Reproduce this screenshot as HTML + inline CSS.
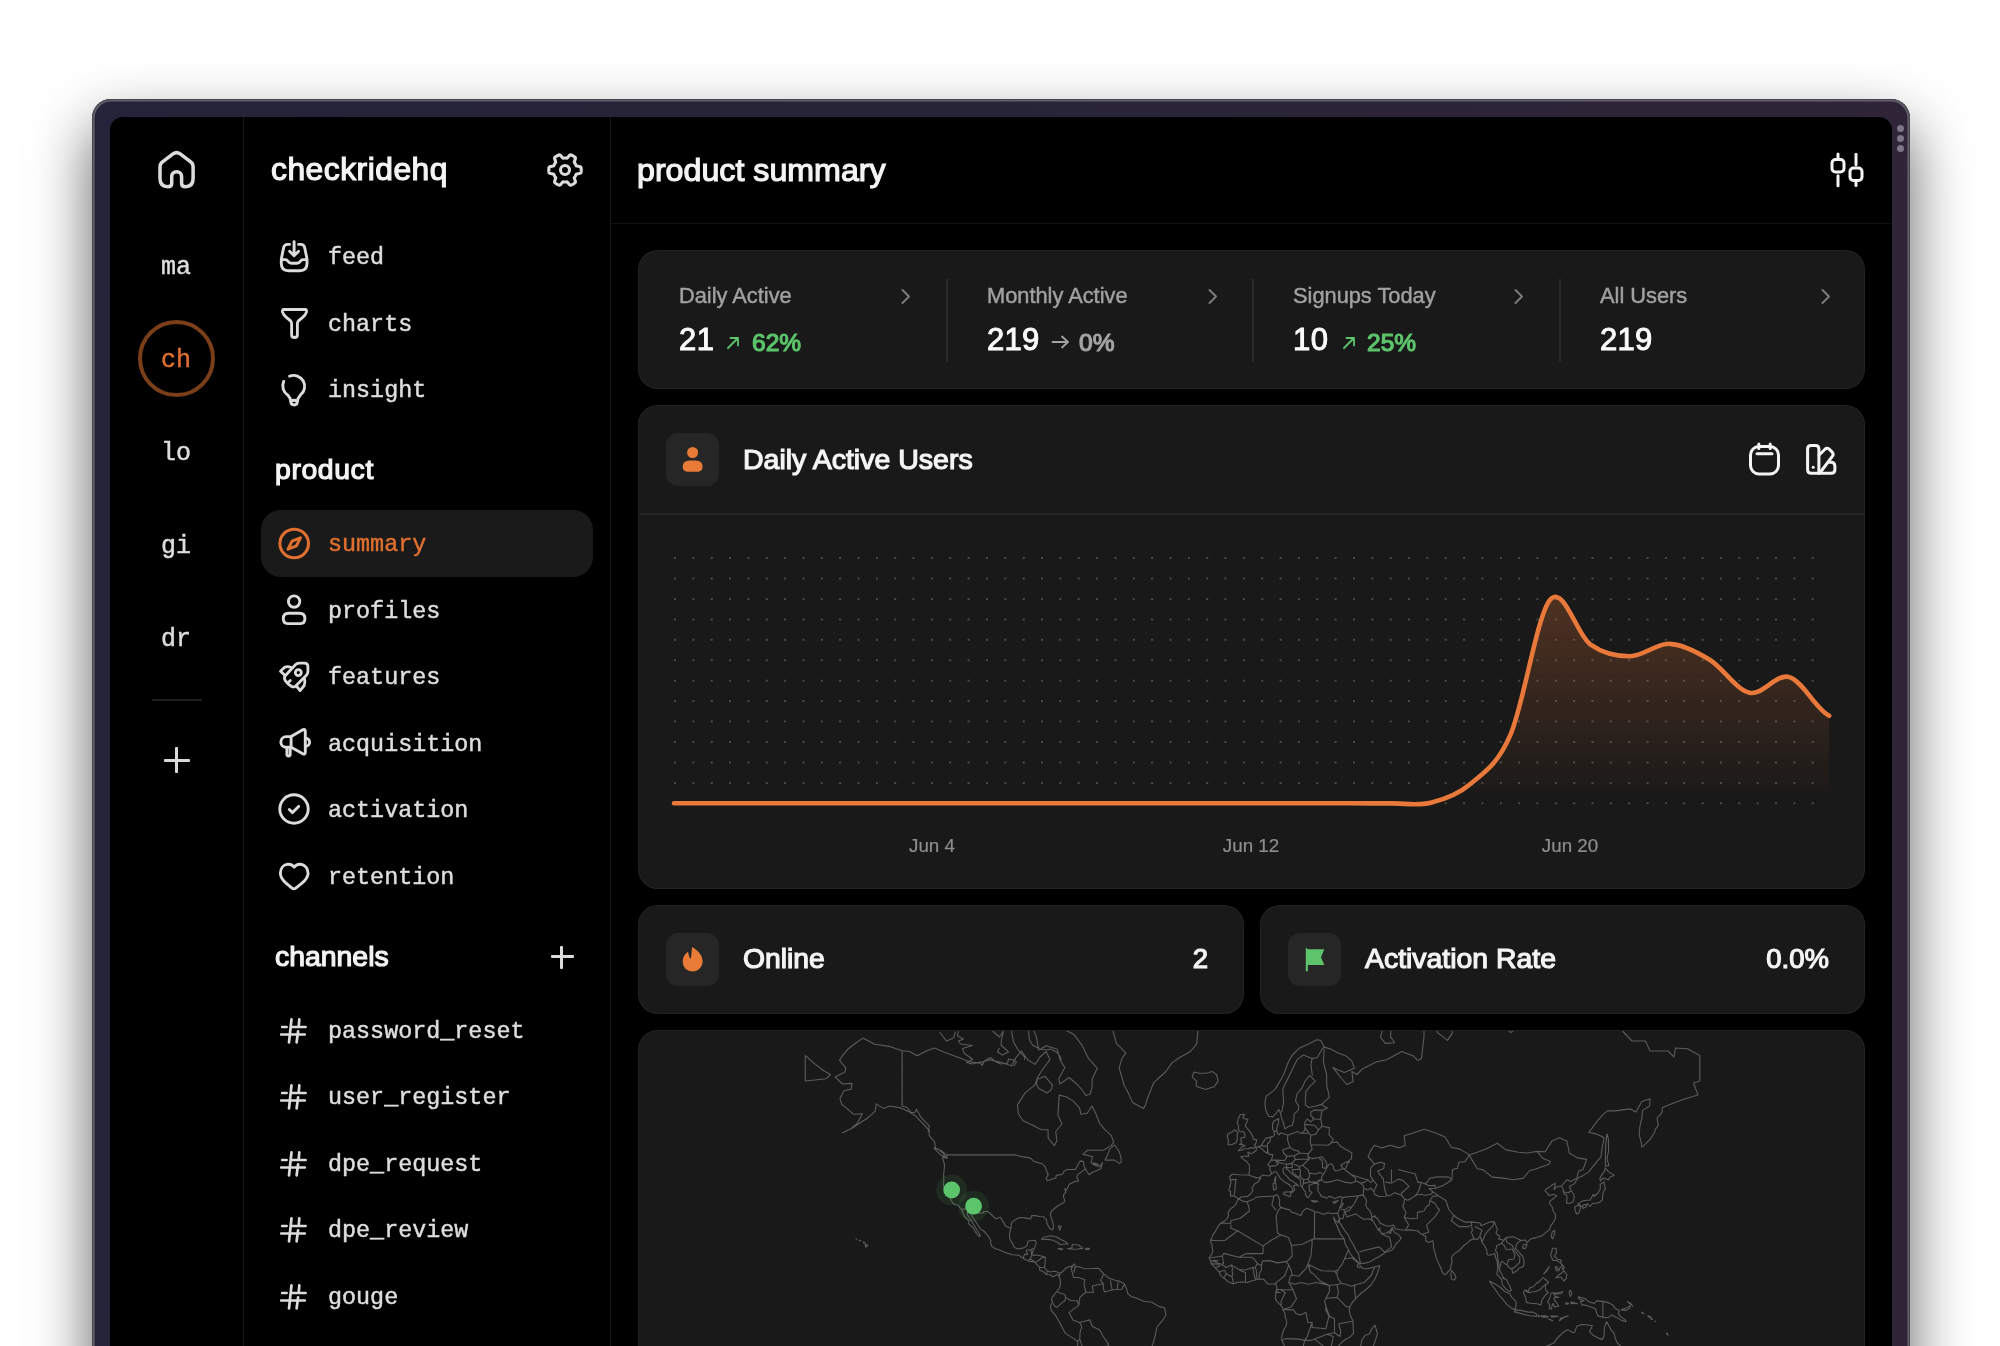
<!DOCTYPE html>
<html><head><meta charset="utf-8"><style>
*{margin:0;padding:0;box-sizing:border-box}
html,body{width:2000px;height:1346px;overflow:hidden;background:#fff}
body{position:relative;font-family:"Liberation Sans",sans-serif;color:#f2f2f2}
.a{position:absolute;will-change:transform}
.mono{font-family:"Liberation Mono",monospace;-webkit-text-stroke:0.45px currentColor}
#frame{left:92px;top:99px;width:1818px;height:1400px;border-radius:19px;
 background:linear-gradient(90deg,#242339 0%,#282437 50%,#2f2438 100%);
 box-shadow:inset 0 0 0 1px #47464e,inset 0 0 0 2.6px #62606b,0 28px 60px rgba(0,0,0,.62)}
#screen{left:110px;top:117px;width:1782px;height:1400px;border-radius:13px;background:#000;overflow:hidden}
.vline{background:#161616}
.navt{font-family:"Liberation Mono",monospace;font-size:23.4px;color:#dedede;white-space:pre;-webkit-text-stroke:0.45px currentColor;margin-top:2px}
.ico{position:absolute;overflow:visible}
.card{position:absolute;background:#191919;border-radius:20px;box-shadow:0 0 0 1px #222 inset}
.lbl{font-size:20px;color:#a3a3a3}
.val{font-size:31px;color:#fafafa}
</style></head><body>
<div id="frame" class="a"></div>
<div class="a" style="left:1897px;top:125px;width:7px;height:7px;border-radius:50%;background:#7e7787"></div>
<div class="a" style="left:1897px;top:135px;width:7px;height:7px;border-radius:50%;background:#7e7787"></div>
<div class="a" style="left:1897px;top:145px;width:7px;height:7px;border-radius:50%;background:#7e7787"></div>
<div id="screen" class="a"></div>
<!-- column borders -->
<div class="a vline" style="left:243px;top:117px;width:1px;height:1240px"></div>
<div class="a vline" style="left:610px;top:117px;width:1px;height:1240px"></div>
<div class="a" style="left:611px;top:222.6px;width:1281px;height:1px;background:#111"></div>

<!-- RAIL -->

<svg class="ico" style="left:150px;top:145px" width="50" height="50" viewBox="150 145 50 50" fill="none" stroke="#dcdcdc" stroke-width="3.5" stroke-linejoin="round" stroke-linecap="round"><path d="M171.7 176.6 A4.95 4.95 0 0 1 181.6 176.6 V183.2 Q181.6 186.7 185.3 186.7 Q193.1 186.7 193.1 178.5 V166.8 Q193.1 163.8 190.7 161.9 L180.2 153.9 Q176.6 151.3 173 153.9 L162.5 161.9 Q160 163.8 160 166.8 V178.5 Q160 186.7 167.8 186.7 Q171.7 186.7 171.7 183.2 Z"/></svg>
<div class="a mono" style="left:140px;top:255px;width:72px;text-align:center;font-size:25px;line-height:25px;color:#dedede">ma</div>
<div class="a" style="left:138px;top:320px;width:77px;height:77px;border-radius:50%;border:4px solid #7a3e19"></div>
<div class="a mono" style="left:140px;top:348px;width:72px;text-align:center;font-size:25px;line-height:25px;color:#e0702f">ch</div>
<div class="a mono" style="left:140px;top:441px;width:72px;text-align:center;font-size:25px;line-height:25px;color:#dedede">lo</div>
<div class="a mono" style="left:140px;top:534px;width:72px;text-align:center;font-size:25px;line-height:25px;color:#dedede">gi</div>
<div class="a mono" style="left:140px;top:627px;width:72px;text-align:center;font-size:25px;line-height:25px;color:#dedede">dr</div>
<div class="a" style="left:152px;top:699px;width:50px;height:1.5px;background:#1e1e1e"></div>
<div class="a" style="left:163.5px;top:758.8px;width:26px;height:3px;background:#dadada;border-radius:1px"></div>
<div class="a" style="left:175.3px;top:747px;width:3px;height:26px;background:#dadada;border-radius:1px"></div>


<!-- SIDEBAR -->
<div class="a" style="left:271px;top:154.28px;font-size:31.8px;line-height:31.8px;color:#f4f4f4;-webkit-text-stroke:1.2px #f4f4f4;white-space:nowrap;letter-spacing:0.5px">checkridehq</div>
<svg class="ico" style="left:543px;top:148px" width="44" height="44" viewBox="543 148 44 44" fill="none" stroke="#dcdcdc" stroke-width="3.1" stroke-linejoin="round"><path d="M581.20 170.00 L581.19 170.57 L581.16 171.13 L581.11 171.69 L581.04 172.25 L580.87 172.80 L580.20 173.23 L579.19 173.54 L578.05 173.74 L577.04 173.91 L576.35 174.13 L576.13 174.50 L575.96 174.88 L575.79 175.26 L575.60 175.63 L575.39 176.00 L575.18 176.36 L574.95 176.71 L574.71 177.05 L574.46 177.39 L574.26 177.77 L574.41 178.47 L574.77 179.43 L575.16 180.52 L575.40 181.55 L575.36 182.35 L574.97 182.77 L574.52 183.11 L574.06 183.43 L573.58 183.74 L573.10 184.03 L572.61 184.30 L572.10 184.56 L571.59 184.80 L571.07 185.02 L570.51 185.15 L569.80 184.78 L569.03 184.05 L568.29 183.18 L567.63 182.38 L567.10 181.90 L566.67 181.88 L566.25 181.93 L565.84 181.97 L565.42 181.99 L565.00 182.00 L564.58 181.99 L564.16 181.97 L563.75 181.93 L563.33 181.88 L562.90 181.90 L562.37 182.38 L561.71 183.18 L560.97 184.05 L560.20 184.78 L559.49 185.15 L558.93 185.02 L558.41 184.80 L557.90 184.56 L557.39 184.30 L556.90 184.03 L556.42 183.74 L555.94 183.43 L555.48 183.11 L555.03 182.77 L554.64 182.35 L554.60 181.55 L554.84 180.52 L555.23 179.43 L555.59 178.47 L555.74 177.77 L555.54 177.39 L555.29 177.05 L555.05 176.71 L554.82 176.36 L554.61 176.00 L554.40 175.63 L554.21 175.26 L554.04 174.88 L553.87 174.50 L553.65 174.13 L552.96 173.91 L551.95 173.74 L550.81 173.54 L549.80 173.23 L549.13 172.80 L548.96 172.25 L548.89 171.69 L548.84 171.13 L548.81 170.57 L548.80 170.00 L548.81 169.43 L548.84 168.87 L548.89 168.31 L548.96 167.75 L549.13 167.20 L549.80 166.77 L550.81 166.46 L551.95 166.26 L552.96 166.09 L553.65 165.87 L553.87 165.50 L554.04 165.12 L554.21 164.74 L554.40 164.37 L554.61 164.00 L554.82 163.64 L555.05 163.29 L555.29 162.95 L555.54 162.61 L555.74 162.23 L555.59 161.53 L555.23 160.57 L554.84 159.48 L554.60 158.45 L554.64 157.65 L555.03 157.23 L555.48 156.89 L555.94 156.57 L556.42 156.26 L556.90 155.97 L557.39 155.70 L557.90 155.44 L558.41 155.20 L558.93 154.98 L559.49 154.85 L560.20 155.22 L560.97 155.95 L561.71 156.82 L562.37 157.62 L562.90 158.10 L563.33 158.12 L563.75 158.07 L564.16 158.03 L564.58 158.01 L565.00 158.00 L565.42 158.01 L565.84 158.03 L566.25 158.07 L566.67 158.12 L567.10 158.10 L567.63 157.62 L568.29 156.82 L569.03 155.95 L569.80 155.22 L570.51 154.85 L571.07 154.98 L571.59 155.20 L572.10 155.44 L572.61 155.70 L573.10 155.97 L573.58 156.26 L574.06 156.57 L574.52 156.89 L574.97 157.23 L575.36 157.65 L575.40 158.45 L575.16 159.48 L574.77 160.57 L574.41 161.53 L574.26 162.23 L574.46 162.61 L574.71 162.95 L574.95 163.29 L575.18 163.64 L575.39 164.00 L575.60 164.37 L575.79 164.74 L575.96 165.12 L576.13 165.50 L576.35 165.87 L577.04 166.09 L578.05 166.26 L579.19 166.46 L580.20 166.77 L580.87 167.20 L581.04 167.75 L581.11 168.31 L581.16 168.87 L581.19 169.43Z"/><circle cx="565" cy="170" r="4.5"/></svg>
<div class="a navt" style="left:328px;top:244px;line-height:24px;color:#dedede">feed</div>
<div class="a navt" style="left:328px;top:310.5px;line-height:24px;color:#dedede">charts</div>
<div class="a navt" style="left:328px;top:377px;line-height:24px;color:#dedede">insight</div>
<div class="a" style="left:261px;top:510px;width:332px;height:67px;border-radius:20px;background:#1a1a1a"></div>
<div class="a navt" style="left:328px;top:531px;line-height:24px;color:#e0702f">summary</div>
<div class="a navt" style="left:328px;top:597.5px;line-height:24px;color:#dedede">profiles</div>
<div class="a navt" style="left:328px;top:664px;line-height:24px;color:#dedede">features</div>
<div class="a navt" style="left:328px;top:730.5px;line-height:24px;color:#dedede">acquisition</div>
<div class="a navt" style="left:328px;top:797px;line-height:24px;color:#dedede">activation</div>
<div class="a navt" style="left:328px;top:864px;line-height:24px;color:#dedede">retention</div>
<svg class="ico" style="left:272px;top:234px" width="46" height="46" viewBox="272 234 46 46" fill="none" stroke="#dcdcdc" stroke-width="2.9" stroke-linecap="round" stroke-linejoin="round"><path d="M289.5 244.4 H287.5 Q284.3 244.4 283.6 247.8 L281.6 257.5 Q281.3 259 281.3 261 V263.5 Q281.3 270.7 288.5 270.7 H299.8 Q307 270.7 307 263.5 V261 Q307 259 306.7 257.5 L304.7 247.8 Q304 244.4 300.8 244.4 H298.6"/><path d="M281.5 259.6 H285.3 Q287 259.6 288 261.2 Q289.3 263.3 291.5 263.3 H296.9 Q299.1 263.3 300.4 261.2 Q301.4 259.6 303.1 259.6 H306.8"/><path d="M294.1 241.6 V255 M289.6 251.2 L294.1 255.7 L298.6 251.2"/></svg>
<svg class="ico" style="left:280.6px;top:307.2px" width="27" height="32" viewBox="0 0 28 31" preserveAspectRatio="none" fill="none" stroke="#dcdcdc" stroke-width="2.9" stroke-linecap="round" stroke-linejoin="round"><path d="M3 2.5 H25 Q27 2.5 26.4 5 Q25.5 8 22 10.5 L18.5 13 Q17 14.3 17 16 V26.8 Q17 29.6 14 29.6 Q11 29.6 11 26.8 V16 Q11 14.3 9.5 13 L6 10.5 Q2.5 8 1.6 5 Q1 2.5 3 2.5 Z"/></svg>
<svg class="ico" style="left:276px;top:370px" width="36" height="40" viewBox="276 370 36 40" fill="none" stroke="#dcdcdc" stroke-width="2.9" stroke-linecap="round" stroke-linejoin="round"><path d="M289.6 376.2 A11 11 0 0 1 300.3 395.2 Q297.6 398 297.4 401.5 Q297.2 405 294.1 405 Q291 405 290.8 401.5 Q290.6 398 287.9 395.2 A11 11 0 0 1 283.7 381.4"/><path d="M291 401.2 Q294.1 399.4 297.2 401.2"/></svg>
<svg class="ico" style="left:274px;top:523px" width="40" height="40" viewBox="274 523 40 40" fill="none" stroke="#e0702f" stroke-width="3" stroke-linecap="round" stroke-linejoin="round"><circle cx="294.2" cy="543.5" r="14.3"/><path d="M288 549.2 L292 541.2 L300.4 537.8 L296.4 545.8 Z"/></svg>
<svg class="ico" style="left:276px;top:590px" width="36" height="40" viewBox="276 590 36 40" fill="none" stroke="#dcdcdc" stroke-width="2.9" stroke-linecap="round" stroke-linejoin="round"><circle cx="294.1" cy="601.6" r="5.7"/><path d="M288.5 613.3 H299.6 Q304.9 613.3 304.9 618.8 Q304.9 623.6 300.5 623.6 H287.7 Q283.3 623.6 283.3 618.8 Q283.3 613.3 288.5 613.3 Z"/></svg>
<svg class="ico" style="left:272px;top:654px" width="46" height="46" viewBox="272 654 46 46" fill="none" stroke="#dcdcdc" stroke-width="2.8" stroke-linecap="round" stroke-linejoin="round"><path d="M295.9 664.3 Q297.5 663.1 299.5 663.1 H304.5 Q307.9 663.1 307.9 666.5 V671.5 Q307.9 673.7 306.4 675.2 L295.2 686.4 Q293.6 687.6 291.3 686.2 Q287.5 684 285.2 680.5 Q283.8 677.8 285 676 Z"/><path d="M291.1 667.5 Q287.8 665.8 284.6 667.3 L280.5 671.3 L284.3 674.8"/><path d="M304.6 679.2 Q305.4 682.5 304.2 685.5 L300.1 690.6 L296.8 686.5"/><path d="M288.1 682.6 L290.3 680.4"/><circle cx="298.3" cy="672.6" r="3"/></svg>
<svg class="ico" style="left:272px;top:720px" width="46" height="46" viewBox="272 720 46 46" fill="none" stroke="#dcdcdc" stroke-width="2.9" stroke-linecap="round" stroke-linejoin="round"><path d="M291.1 736.6 H286.2 A5.35 5.35 0 0 0 286.2 747.3 H291.1 Z"/><path d="M291.1 736.6 L302.4 729.9 Q305.3 728.4 305.3 731.6 V751.9 Q305.3 755.1 302.4 753.6 L291.1 747.3"/><path d="M286.9 747.5 V754.3 Q286.9 756 288.55 756 Q290.2 756 290.2 754.3 V747.5"/><path d="M305.6 738.2 A4 4 0 0 1 305.6 746.2"/></svg>
<svg class="ico" style="left:277px;top:792px" width="34" height="34" viewBox="0 0 34 34" fill="none" stroke="#dcdcdc" stroke-width="2.9" stroke-linecap="round" stroke-linejoin="round"><circle cx="17" cy="17" r="14.2"/><path d="M12.3 17.5 L15.5 20.6 L21.6 14.4"/></svg>
<svg class="ico" style="left:272px;top:853px" width="46" height="46" viewBox="272 853 46 46" fill="none" stroke="#dcdcdc" stroke-width="2.9" stroke-linecap="round" stroke-linejoin="round"><path d="M294.2 867.2 C292.2 864.6 290 864.2 287.9 864.3 C283.2 864.6 280.4 868.4 280.4 873.2 C280.4 877.5 283 880.6 286.6 883.7 L291.7 887.9 Q293.9 889.7 296.1 887.9 L301.4 883.7 C305 880.6 308.1 877.5 308.1 873.2 C308.1 868.4 305 864.6 300.5 864.3 C298.4 864.2 296.2 864.6 294.2 867.2 Z"/></svg>
<div class="a" style="left:274.5px;top:455.46px;font-size:28.4px;line-height:28.4px;color:#f4f4f4;-webkit-text-stroke:1.2px #f4f4f4;white-space:nowrap;letter-spacing:0.6px">product</div>
<div class="a" style="left:274.5px;top:942.36px;font-size:28.4px;line-height:28.4px;color:#f4f4f4;-webkit-text-stroke:1.2px #f4f4f4;white-space:nowrap;">channels</div>
<div class="a" style="left:550.5px;top:955.3px;width:22.5px;height:2.8px;background:#dcdcdc;border-radius:1px"></div><div class="a" style="left:560.4px;top:945.5px;width:2.8px;height:22.5px;background:#dcdcdc;border-radius:1px"></div>
<div class="a navt" style="left:328px;top:1017.5px;line-height:24px">password_reset</div>
<svg class="ico" style="left:272px;top:1014.5px" width="40" height="30" viewBox="272 1014.5 40 30" fill="none" stroke="#dcdcdc" stroke-width="2.7" stroke-linecap="round"><path d="M282.2 1026.5 H286.6 M291.9 1026.5 H305.6 M281.2 1034.0 H304.8 M291.5 1018.8 L289 1041.8 M299.3 1018.8 L298.7 1026.0 M298.1 1030.8 L296.6 1041.8"/></svg>
<div class="a navt" style="left:328px;top:1084px;line-height:24px">user_register</div>
<svg class="ico" style="left:272px;top:1081px" width="40" height="30" viewBox="272 1081 40 30" fill="none" stroke="#dcdcdc" stroke-width="2.7" stroke-linecap="round"><path d="M282.2 1093.0 H286.6 M291.9 1093.0 H305.6 M281.2 1100.5 H304.8 M291.5 1085.3 L289 1108.3 M299.3 1085.3 L298.7 1092.5 M298.1 1097.3 L296.6 1108.3"/></svg>
<div class="a navt" style="left:328px;top:1150.5px;line-height:24px">dpe_request</div>
<svg class="ico" style="left:272px;top:1147.5px" width="40" height="30" viewBox="272 1147.5 40 30" fill="none" stroke="#dcdcdc" stroke-width="2.7" stroke-linecap="round"><path d="M282.2 1159.5 H286.6 M291.9 1159.5 H305.6 M281.2 1167.0 H304.8 M291.5 1151.8 L289 1174.8 M299.3 1151.8 L298.7 1159.0 M298.1 1163.8 L296.6 1174.8"/></svg>
<div class="a navt" style="left:328px;top:1217px;line-height:24px">dpe_review</div>
<svg class="ico" style="left:272px;top:1214px" width="40" height="30" viewBox="272 1214 40 30" fill="none" stroke="#dcdcdc" stroke-width="2.7" stroke-linecap="round"><path d="M282.2 1226.0 H286.6 M291.9 1226.0 H305.6 M281.2 1233.5 H304.8 M291.5 1218.3 L289 1241.3 M299.3 1218.3 L298.7 1225.5 M298.1 1230.3 L296.6 1241.3"/></svg>
<div class="a navt" style="left:328px;top:1284px;line-height:24px">gouge</div>
<svg class="ico" style="left:272px;top:1281px" width="40" height="30" viewBox="272 1281 40 30" fill="none" stroke="#dcdcdc" stroke-width="2.7" stroke-linecap="round"><path d="M282.2 1293.0 H286.6 M291.9 1293.0 H305.6 M281.2 1300.5 H304.8 M291.5 1285.3 L289 1308.3 M299.3 1285.3 L298.7 1292.5 M298.1 1297.3 L296.6 1308.3"/></svg>


<!-- MAIN -->
<div class="a" style="left:637px;top:153.84px;font-size:32.2px;line-height:32.2px;color:#f4f4f4;-webkit-text-stroke:1.2px #f4f4f4;white-space:nowrap;">product summary</div>
<svg class="ico" style="left:1829px;top:152px" width="36" height="36" viewBox="0 0 36 36" fill="none" stroke="#f4f4f4" stroke-width="3" stroke-linecap="round" stroke-linejoin="round"><line x1="9" y1="2" x2="9" y2="7.5"/><rect x="3" y="7.5" width="12" height="12.5" rx="3.5"/><line x1="9" y1="23.8" x2="9" y2="33.8"/><line x1="27" y1="2.2" x2="27" y2="12.8"/><rect x="21" y="16" width="12" height="12.5" rx="3.5"/><line x1="27" y1="28.5" x2="27" y2="33.5"/></svg>
<div class="card" style="left:638px;top:250px;width:1227px;height:139px"></div>
<div class="a" style="left:945.5px;top:279px;width:1.5px;height:83px;background:#2a2a2a"></div>
<div class="a" style="left:1252px;top:279px;width:1.5px;height:83px;background:#2a2a2a"></div>
<div class="a" style="left:1558.5px;top:279px;width:1.5px;height:83px;background:#2a2a2a"></div>
<div class="a" style="left:679.2px;top:285.15px;font-size:21.8px;line-height:21.8px;color:#a1a1a1;-webkit-text-stroke:0.45px #a1a1a1;white-space:nowrap;">Daily Active</div>
<div class="a" style="left:987px;top:285.15px;font-size:21.8px;line-height:21.8px;color:#a1a1a1;-webkit-text-stroke:0.45px #a1a1a1;white-space:nowrap;">Monthly Active</div>
<div class="a" style="left:1293.4px;top:285.15px;font-size:21.8px;line-height:21.8px;color:#a1a1a1;-webkit-text-stroke:0.45px #a1a1a1;white-space:nowrap;">Signups Today</div>
<div class="a" style="left:1600px;top:285.15px;font-size:21.8px;line-height:21.8px;color:#a1a1a1;-webkit-text-stroke:0.45px #a1a1a1;white-space:nowrap;">All Users</div>
<svg class="ico" style="left:900px;top:288px" width="12" height="17" viewBox="0 0 12 17" fill="none" stroke="#7c7c7c" stroke-width="2" stroke-linecap="round" stroke-linejoin="round"><path d="M2.5 2 L9 8.5 L2.5 15"/></svg>
<svg class="ico" style="left:1206.5px;top:288px" width="12" height="17" viewBox="0 0 12 17" fill="none" stroke="#7c7c7c" stroke-width="2" stroke-linecap="round" stroke-linejoin="round"><path d="M2.5 2 L9 8.5 L2.5 15"/></svg>
<svg class="ico" style="left:1512.5px;top:288px" width="12" height="17" viewBox="0 0 12 17" fill="none" stroke="#7c7c7c" stroke-width="2" stroke-linecap="round" stroke-linejoin="round"><path d="M2.5 2 L9 8.5 L2.5 15"/></svg>
<svg class="ico" style="left:1819.5px;top:288px" width="12" height="17" viewBox="0 0 12 17" fill="none" stroke="#7c7c7c" stroke-width="2" stroke-linecap="round" stroke-linejoin="round"><path d="M2.5 2 L9 8.5 L2.5 15"/></svg>
<div class="a" style="left:679.2px;top:324.46px;font-size:31px;line-height:31px;color:#fafafa;-webkit-text-stroke:1.0px #fafafa;white-space:nowrap;letter-spacing:0.5px">21</div>
<div class="a" style="left:987px;top:324.46px;font-size:31px;line-height:31px;color:#fafafa;-webkit-text-stroke:1.0px #fafafa;white-space:nowrap;letter-spacing:0.3px">219</div>
<div class="a" style="left:1293.4px;top:324.46px;font-size:31px;line-height:31px;color:#fafafa;-webkit-text-stroke:1.0px #fafafa;white-space:nowrap;letter-spacing:0.5px">10</div>
<div class="a" style="left:1600px;top:324.46px;font-size:31px;line-height:31px;color:#fafafa;-webkit-text-stroke:1.0px #fafafa;white-space:nowrap;letter-spacing:0.3px">219</div>
<div class="a" style="left:752px;top:330.66px;font-size:24.5px;line-height:24.5px;color:#5cc46b;-webkit-text-stroke:1.2px #5cc46b;white-space:nowrap;">62%</div>
<div class="a" style="left:1079px;top:330.66px;font-size:24.5px;line-height:24.5px;color:#a3a3a3;-webkit-text-stroke:1.2px #a3a3a3;white-space:nowrap;">0%</div>
<div class="a" style="left:1367.4px;top:330.66px;font-size:24.5px;line-height:24.5px;color:#5cc46b;-webkit-text-stroke:1.2px #5cc46b;white-space:nowrap;">25%</div>
<svg class="ico" style="left:726px;top:336px" width="14" height="14" viewBox="0 0 14 14" fill="none" stroke="#5cc46b" stroke-width="1.8" stroke-linecap="round" stroke-linejoin="round"><path d="M2 12 L12 2 M4.5 2 H12 V9.5"/></svg>
<svg class="ico" style="left:1342px;top:336px" width="14" height="14" viewBox="0 0 14 14" fill="none" stroke="#5cc46b" stroke-width="1.8" stroke-linecap="round" stroke-linejoin="round"><path d="M2 12 L12 2 M4.5 2 H12 V9.5"/></svg>
<svg class="ico" style="left:1051px;top:334px" width="19" height="16" viewBox="0 0 19 16" fill="none" stroke="#a3a3a3" stroke-width="1.8" stroke-linecap="round" stroke-linejoin="round"><path d="M1.5 8 H17 M11 2.5 L17 8 L11 13.5"/></svg>
<div class="card" style="left:638px;top:405px;width:1227px;height:484px"></div>
<div class="a" style="left:639.5px;top:513px;width:1224.5px;height:1.5px;background:#242424"></div>
<div class="a" style="left:666px;top:432.7px;width:53px;height:53px;border-radius:12px;background:#262626"></div>
<svg class="ico" style="left:676px;top:440px" width="34" height="36" viewBox="676 440 34 36"><circle cx="692.6" cy="452.5" r="5.5" fill="#e87b37"/><path d="M682.7 466.6 Q682.7 460.5 690 460.5 H695.3 Q702.6 460.5 702.6 466.6 Q702.6 471.7 698 471.7 H687.3 Q682.7 471.7 682.7 466.6 Z" fill="#e87b37"/></svg>
<div class="a" style="left:742.9px;top:444.77px;font-size:28.5px;line-height:28.5px;color:#f4f4f4;-webkit-text-stroke:1.2px #f4f4f4;white-space:nowrap;">Daily Active Users</div>
<svg class="ico" style="left:1748px;top:442px" width="33" height="34" viewBox="0 0 33 34" fill="none" stroke="#f4f4f4" stroke-width="3" stroke-linecap="round" stroke-linejoin="round"><rect x="2.5" y="4.5" width="28" height="27.5" rx="8.5"/><line x1="10.8" y1="2" x2="10.8" y2="6.5"/><line x1="22.2" y1="2" x2="22.2" y2="6.5"/><line x1="9" y1="11.8" x2="24" y2="11.8"/></svg>
<svg class="ico" style="left:1800px;top:438px" width="42" height="42" viewBox="1800 438 42 42" fill="none" stroke="#f4f4f4" stroke-width="3" stroke-linecap="round" stroke-linejoin="round"><path d="M1807.6 449 Q1807.6 445.5 1811.1 445.5 H1815.4 Q1818.9 445.5 1818.9 449 V473.3 H1811.1 Q1807.6 473.3 1807.6 469.8 Z"/><path d="M1818.9 455.3 L1825 449.2 Q1827 447.3 1829.2 449.2 L1832.2 452.1 Q1834 454.3 1832.3 456.4 L1820.2 472.5"/><path d="M1828.4 462.2 H1831 Q1834.9 462.2 1834.9 466.6 V469.5 Q1834.9 473.3 1831 473.3 H1818.9"/><circle cx="1813.2" cy="467.3" r="1.5" fill="#f4f4f4" stroke="none"/></svg>
<svg class="a" style="left:0;top:0" width="2000" height="1346" viewBox="0 0 2000 1346">
<defs><linearGradient id="gfill" x1="0" y1="0" x2="0" y2="1"><stop offset="0" stop-color="#e8793a" stop-opacity="0.26"/><stop offset="1" stop-color="#e8793a" stop-opacity="0"/></linearGradient></defs>
<path d="M674.0 557.1h2v2h-2zM692.4 557.1h2v2h-2zM710.7 557.1h2v2h-2zM729.0 557.1h2v2h-2zM747.4 557.1h2v2h-2zM765.8 557.1h2v2h-2zM784.1 557.1h2v2h-2zM802.5 557.1h2v2h-2zM820.8 557.1h2v2h-2zM839.1 557.1h2v2h-2zM857.5 557.1h2v2h-2zM875.9 557.1h2v2h-2zM894.2 557.1h2v2h-2zM912.5 557.1h2v2h-2zM930.9 557.1h2v2h-2zM949.2 557.1h2v2h-2zM967.6 557.1h2v2h-2zM986.0 557.1h2v2h-2zM1004.3 557.1h2v2h-2zM1022.7 557.1h2v2h-2zM1041.0 557.1h2v2h-2zM1059.3 557.1h2v2h-2zM1077.7 557.1h2v2h-2zM1096.0 557.1h2v2h-2zM1114.4 557.1h2v2h-2zM1132.8 557.1h2v2h-2zM1151.1 557.1h2v2h-2zM1169.5 557.1h2v2h-2zM1187.8 557.1h2v2h-2zM1206.2 557.1h2v2h-2zM1224.5 557.1h2v2h-2zM1242.8 557.1h2v2h-2zM1261.2 557.1h2v2h-2zM1279.6 557.1h2v2h-2zM1297.9 557.1h2v2h-2zM1316.2 557.1h2v2h-2zM1334.6 557.1h2v2h-2zM1353.0 557.1h2v2h-2zM1371.3 557.1h2v2h-2zM1389.7 557.1h2v2h-2zM1408.0 557.1h2v2h-2zM1426.3 557.1h2v2h-2zM1444.7 557.1h2v2h-2zM1463.1 557.1h2v2h-2zM1481.4 557.1h2v2h-2zM1499.8 557.1h2v2h-2zM1518.1 557.1h2v2h-2zM1536.5 557.1h2v2h-2zM1554.8 557.1h2v2h-2zM1573.2 557.1h2v2h-2zM1591.5 557.1h2v2h-2zM1609.8 557.1h2v2h-2zM1628.2 557.1h2v2h-2zM1646.6 557.1h2v2h-2zM1664.9 557.1h2v2h-2zM1683.2 557.1h2v2h-2zM1701.6 557.1h2v2h-2zM1720.0 557.1h2v2h-2zM1738.3 557.1h2v2h-2zM1756.7 557.1h2v2h-2zM1775.0 557.1h2v2h-2zM1793.4 557.1h2v2h-2zM1811.7 557.1h2v2h-2zM674.0 577.5h2v2h-2zM692.4 577.5h2v2h-2zM710.7 577.5h2v2h-2zM729.0 577.5h2v2h-2zM747.4 577.5h2v2h-2zM765.8 577.5h2v2h-2zM784.1 577.5h2v2h-2zM802.5 577.5h2v2h-2zM820.8 577.5h2v2h-2zM839.1 577.5h2v2h-2zM857.5 577.5h2v2h-2zM875.9 577.5h2v2h-2zM894.2 577.5h2v2h-2zM912.5 577.5h2v2h-2zM930.9 577.5h2v2h-2zM949.2 577.5h2v2h-2zM967.6 577.5h2v2h-2zM986.0 577.5h2v2h-2zM1004.3 577.5h2v2h-2zM1022.7 577.5h2v2h-2zM1041.0 577.5h2v2h-2zM1059.3 577.5h2v2h-2zM1077.7 577.5h2v2h-2zM1096.0 577.5h2v2h-2zM1114.4 577.5h2v2h-2zM1132.8 577.5h2v2h-2zM1151.1 577.5h2v2h-2zM1169.5 577.5h2v2h-2zM1187.8 577.5h2v2h-2zM1206.2 577.5h2v2h-2zM1224.5 577.5h2v2h-2zM1242.8 577.5h2v2h-2zM1261.2 577.5h2v2h-2zM1279.6 577.5h2v2h-2zM1297.9 577.5h2v2h-2zM1316.2 577.5h2v2h-2zM1334.6 577.5h2v2h-2zM1353.0 577.5h2v2h-2zM1371.3 577.5h2v2h-2zM1389.7 577.5h2v2h-2zM1408.0 577.5h2v2h-2zM1426.3 577.5h2v2h-2zM1444.7 577.5h2v2h-2zM1463.1 577.5h2v2h-2zM1481.4 577.5h2v2h-2zM1499.8 577.5h2v2h-2zM1518.1 577.5h2v2h-2zM1536.5 577.5h2v2h-2zM1554.8 577.5h2v2h-2zM1573.2 577.5h2v2h-2zM1591.5 577.5h2v2h-2zM1609.8 577.5h2v2h-2zM1628.2 577.5h2v2h-2zM1646.6 577.5h2v2h-2zM1664.9 577.5h2v2h-2zM1683.2 577.5h2v2h-2zM1701.6 577.5h2v2h-2zM1720.0 577.5h2v2h-2zM1738.3 577.5h2v2h-2zM1756.7 577.5h2v2h-2zM1775.0 577.5h2v2h-2zM1793.4 577.5h2v2h-2zM1811.7 577.5h2v2h-2zM674.0 598.0h2v2h-2zM692.4 598.0h2v2h-2zM710.7 598.0h2v2h-2zM729.0 598.0h2v2h-2zM747.4 598.0h2v2h-2zM765.8 598.0h2v2h-2zM784.1 598.0h2v2h-2zM802.5 598.0h2v2h-2zM820.8 598.0h2v2h-2zM839.1 598.0h2v2h-2zM857.5 598.0h2v2h-2zM875.9 598.0h2v2h-2zM894.2 598.0h2v2h-2zM912.5 598.0h2v2h-2zM930.9 598.0h2v2h-2zM949.2 598.0h2v2h-2zM967.6 598.0h2v2h-2zM986.0 598.0h2v2h-2zM1004.3 598.0h2v2h-2zM1022.7 598.0h2v2h-2zM1041.0 598.0h2v2h-2zM1059.3 598.0h2v2h-2zM1077.7 598.0h2v2h-2zM1096.0 598.0h2v2h-2zM1114.4 598.0h2v2h-2zM1132.8 598.0h2v2h-2zM1151.1 598.0h2v2h-2zM1169.5 598.0h2v2h-2zM1187.8 598.0h2v2h-2zM1206.2 598.0h2v2h-2zM1224.5 598.0h2v2h-2zM1242.8 598.0h2v2h-2zM1261.2 598.0h2v2h-2zM1279.6 598.0h2v2h-2zM1297.9 598.0h2v2h-2zM1316.2 598.0h2v2h-2zM1334.6 598.0h2v2h-2zM1353.0 598.0h2v2h-2zM1371.3 598.0h2v2h-2zM1389.7 598.0h2v2h-2zM1408.0 598.0h2v2h-2zM1426.3 598.0h2v2h-2zM1444.7 598.0h2v2h-2zM1463.1 598.0h2v2h-2zM1481.4 598.0h2v2h-2zM1499.8 598.0h2v2h-2zM1518.1 598.0h2v2h-2zM1536.5 598.0h2v2h-2zM1554.8 598.0h2v2h-2zM1573.2 598.0h2v2h-2zM1591.5 598.0h2v2h-2zM1609.8 598.0h2v2h-2zM1628.2 598.0h2v2h-2zM1646.6 598.0h2v2h-2zM1664.9 598.0h2v2h-2zM1683.2 598.0h2v2h-2zM1701.6 598.0h2v2h-2zM1720.0 598.0h2v2h-2zM1738.3 598.0h2v2h-2zM1756.7 598.0h2v2h-2zM1775.0 598.0h2v2h-2zM1793.4 598.0h2v2h-2zM1811.7 598.0h2v2h-2zM674.0 618.4h2v2h-2zM692.4 618.4h2v2h-2zM710.7 618.4h2v2h-2zM729.0 618.4h2v2h-2zM747.4 618.4h2v2h-2zM765.8 618.4h2v2h-2zM784.1 618.4h2v2h-2zM802.5 618.4h2v2h-2zM820.8 618.4h2v2h-2zM839.1 618.4h2v2h-2zM857.5 618.4h2v2h-2zM875.9 618.4h2v2h-2zM894.2 618.4h2v2h-2zM912.5 618.4h2v2h-2zM930.9 618.4h2v2h-2zM949.2 618.4h2v2h-2zM967.6 618.4h2v2h-2zM986.0 618.4h2v2h-2zM1004.3 618.4h2v2h-2zM1022.7 618.4h2v2h-2zM1041.0 618.4h2v2h-2zM1059.3 618.4h2v2h-2zM1077.7 618.4h2v2h-2zM1096.0 618.4h2v2h-2zM1114.4 618.4h2v2h-2zM1132.8 618.4h2v2h-2zM1151.1 618.4h2v2h-2zM1169.5 618.4h2v2h-2zM1187.8 618.4h2v2h-2zM1206.2 618.4h2v2h-2zM1224.5 618.4h2v2h-2zM1242.8 618.4h2v2h-2zM1261.2 618.4h2v2h-2zM1279.6 618.4h2v2h-2zM1297.9 618.4h2v2h-2zM1316.2 618.4h2v2h-2zM1334.6 618.4h2v2h-2zM1353.0 618.4h2v2h-2zM1371.3 618.4h2v2h-2zM1389.7 618.4h2v2h-2zM1408.0 618.4h2v2h-2zM1426.3 618.4h2v2h-2zM1444.7 618.4h2v2h-2zM1463.1 618.4h2v2h-2zM1481.4 618.4h2v2h-2zM1499.8 618.4h2v2h-2zM1518.1 618.4h2v2h-2zM1536.5 618.4h2v2h-2zM1554.8 618.4h2v2h-2zM1573.2 618.4h2v2h-2zM1591.5 618.4h2v2h-2zM1609.8 618.4h2v2h-2zM1628.2 618.4h2v2h-2zM1646.6 618.4h2v2h-2zM1664.9 618.4h2v2h-2zM1683.2 618.4h2v2h-2zM1701.6 618.4h2v2h-2zM1720.0 618.4h2v2h-2zM1738.3 618.4h2v2h-2zM1756.7 618.4h2v2h-2zM1775.0 618.4h2v2h-2zM1793.4 618.4h2v2h-2zM1811.7 618.4h2v2h-2zM674.0 638.8h2v2h-2zM692.4 638.8h2v2h-2zM710.7 638.8h2v2h-2zM729.0 638.8h2v2h-2zM747.4 638.8h2v2h-2zM765.8 638.8h2v2h-2zM784.1 638.8h2v2h-2zM802.5 638.8h2v2h-2zM820.8 638.8h2v2h-2zM839.1 638.8h2v2h-2zM857.5 638.8h2v2h-2zM875.9 638.8h2v2h-2zM894.2 638.8h2v2h-2zM912.5 638.8h2v2h-2zM930.9 638.8h2v2h-2zM949.2 638.8h2v2h-2zM967.6 638.8h2v2h-2zM986.0 638.8h2v2h-2zM1004.3 638.8h2v2h-2zM1022.7 638.8h2v2h-2zM1041.0 638.8h2v2h-2zM1059.3 638.8h2v2h-2zM1077.7 638.8h2v2h-2zM1096.0 638.8h2v2h-2zM1114.4 638.8h2v2h-2zM1132.8 638.8h2v2h-2zM1151.1 638.8h2v2h-2zM1169.5 638.8h2v2h-2zM1187.8 638.8h2v2h-2zM1206.2 638.8h2v2h-2zM1224.5 638.8h2v2h-2zM1242.8 638.8h2v2h-2zM1261.2 638.8h2v2h-2zM1279.6 638.8h2v2h-2zM1297.9 638.8h2v2h-2zM1316.2 638.8h2v2h-2zM1334.6 638.8h2v2h-2zM1353.0 638.8h2v2h-2zM1371.3 638.8h2v2h-2zM1389.7 638.8h2v2h-2zM1408.0 638.8h2v2h-2zM1426.3 638.8h2v2h-2zM1444.7 638.8h2v2h-2zM1463.1 638.8h2v2h-2zM1481.4 638.8h2v2h-2zM1499.8 638.8h2v2h-2zM1518.1 638.8h2v2h-2zM1536.5 638.8h2v2h-2zM1554.8 638.8h2v2h-2zM1573.2 638.8h2v2h-2zM1591.5 638.8h2v2h-2zM1609.8 638.8h2v2h-2zM1628.2 638.8h2v2h-2zM1646.6 638.8h2v2h-2zM1664.9 638.8h2v2h-2zM1683.2 638.8h2v2h-2zM1701.6 638.8h2v2h-2zM1720.0 638.8h2v2h-2zM1738.3 638.8h2v2h-2zM1756.7 638.8h2v2h-2zM1775.0 638.8h2v2h-2zM1793.4 638.8h2v2h-2zM1811.7 638.8h2v2h-2zM674.0 659.3h2v2h-2zM692.4 659.3h2v2h-2zM710.7 659.3h2v2h-2zM729.0 659.3h2v2h-2zM747.4 659.3h2v2h-2zM765.8 659.3h2v2h-2zM784.1 659.3h2v2h-2zM802.5 659.3h2v2h-2zM820.8 659.3h2v2h-2zM839.1 659.3h2v2h-2zM857.5 659.3h2v2h-2zM875.9 659.3h2v2h-2zM894.2 659.3h2v2h-2zM912.5 659.3h2v2h-2zM930.9 659.3h2v2h-2zM949.2 659.3h2v2h-2zM967.6 659.3h2v2h-2zM986.0 659.3h2v2h-2zM1004.3 659.3h2v2h-2zM1022.7 659.3h2v2h-2zM1041.0 659.3h2v2h-2zM1059.3 659.3h2v2h-2zM1077.7 659.3h2v2h-2zM1096.0 659.3h2v2h-2zM1114.4 659.3h2v2h-2zM1132.8 659.3h2v2h-2zM1151.1 659.3h2v2h-2zM1169.5 659.3h2v2h-2zM1187.8 659.3h2v2h-2zM1206.2 659.3h2v2h-2zM1224.5 659.3h2v2h-2zM1242.8 659.3h2v2h-2zM1261.2 659.3h2v2h-2zM1279.6 659.3h2v2h-2zM1297.9 659.3h2v2h-2zM1316.2 659.3h2v2h-2zM1334.6 659.3h2v2h-2zM1353.0 659.3h2v2h-2zM1371.3 659.3h2v2h-2zM1389.7 659.3h2v2h-2zM1408.0 659.3h2v2h-2zM1426.3 659.3h2v2h-2zM1444.7 659.3h2v2h-2zM1463.1 659.3h2v2h-2zM1481.4 659.3h2v2h-2zM1499.8 659.3h2v2h-2zM1518.1 659.3h2v2h-2zM1536.5 659.3h2v2h-2zM1554.8 659.3h2v2h-2zM1573.2 659.3h2v2h-2zM1591.5 659.3h2v2h-2zM1609.8 659.3h2v2h-2zM1628.2 659.3h2v2h-2zM1646.6 659.3h2v2h-2zM1664.9 659.3h2v2h-2zM1683.2 659.3h2v2h-2zM1701.6 659.3h2v2h-2zM1720.0 659.3h2v2h-2zM1738.3 659.3h2v2h-2zM1756.7 659.3h2v2h-2zM1775.0 659.3h2v2h-2zM1793.4 659.3h2v2h-2zM1811.7 659.3h2v2h-2zM674.0 679.7h2v2h-2zM692.4 679.7h2v2h-2zM710.7 679.7h2v2h-2zM729.0 679.7h2v2h-2zM747.4 679.7h2v2h-2zM765.8 679.7h2v2h-2zM784.1 679.7h2v2h-2zM802.5 679.7h2v2h-2zM820.8 679.7h2v2h-2zM839.1 679.7h2v2h-2zM857.5 679.7h2v2h-2zM875.9 679.7h2v2h-2zM894.2 679.7h2v2h-2zM912.5 679.7h2v2h-2zM930.9 679.7h2v2h-2zM949.2 679.7h2v2h-2zM967.6 679.7h2v2h-2zM986.0 679.7h2v2h-2zM1004.3 679.7h2v2h-2zM1022.7 679.7h2v2h-2zM1041.0 679.7h2v2h-2zM1059.3 679.7h2v2h-2zM1077.7 679.7h2v2h-2zM1096.0 679.7h2v2h-2zM1114.4 679.7h2v2h-2zM1132.8 679.7h2v2h-2zM1151.1 679.7h2v2h-2zM1169.5 679.7h2v2h-2zM1187.8 679.7h2v2h-2zM1206.2 679.7h2v2h-2zM1224.5 679.7h2v2h-2zM1242.8 679.7h2v2h-2zM1261.2 679.7h2v2h-2zM1279.6 679.7h2v2h-2zM1297.9 679.7h2v2h-2zM1316.2 679.7h2v2h-2zM1334.6 679.7h2v2h-2zM1353.0 679.7h2v2h-2zM1371.3 679.7h2v2h-2zM1389.7 679.7h2v2h-2zM1408.0 679.7h2v2h-2zM1426.3 679.7h2v2h-2zM1444.7 679.7h2v2h-2zM1463.1 679.7h2v2h-2zM1481.4 679.7h2v2h-2zM1499.8 679.7h2v2h-2zM1518.1 679.7h2v2h-2zM1536.5 679.7h2v2h-2zM1554.8 679.7h2v2h-2zM1573.2 679.7h2v2h-2zM1591.5 679.7h2v2h-2zM1609.8 679.7h2v2h-2zM1628.2 679.7h2v2h-2zM1646.6 679.7h2v2h-2zM1664.9 679.7h2v2h-2zM1683.2 679.7h2v2h-2zM1701.6 679.7h2v2h-2zM1720.0 679.7h2v2h-2zM1738.3 679.7h2v2h-2zM1756.7 679.7h2v2h-2zM1775.0 679.7h2v2h-2zM1793.4 679.7h2v2h-2zM1811.7 679.7h2v2h-2zM674.0 700.1h2v2h-2zM692.4 700.1h2v2h-2zM710.7 700.1h2v2h-2zM729.0 700.1h2v2h-2zM747.4 700.1h2v2h-2zM765.8 700.1h2v2h-2zM784.1 700.1h2v2h-2zM802.5 700.1h2v2h-2zM820.8 700.1h2v2h-2zM839.1 700.1h2v2h-2zM857.5 700.1h2v2h-2zM875.9 700.1h2v2h-2zM894.2 700.1h2v2h-2zM912.5 700.1h2v2h-2zM930.9 700.1h2v2h-2zM949.2 700.1h2v2h-2zM967.6 700.1h2v2h-2zM986.0 700.1h2v2h-2zM1004.3 700.1h2v2h-2zM1022.7 700.1h2v2h-2zM1041.0 700.1h2v2h-2zM1059.3 700.1h2v2h-2zM1077.7 700.1h2v2h-2zM1096.0 700.1h2v2h-2zM1114.4 700.1h2v2h-2zM1132.8 700.1h2v2h-2zM1151.1 700.1h2v2h-2zM1169.5 700.1h2v2h-2zM1187.8 700.1h2v2h-2zM1206.2 700.1h2v2h-2zM1224.5 700.1h2v2h-2zM1242.8 700.1h2v2h-2zM1261.2 700.1h2v2h-2zM1279.6 700.1h2v2h-2zM1297.9 700.1h2v2h-2zM1316.2 700.1h2v2h-2zM1334.6 700.1h2v2h-2zM1353.0 700.1h2v2h-2zM1371.3 700.1h2v2h-2zM1389.7 700.1h2v2h-2zM1408.0 700.1h2v2h-2zM1426.3 700.1h2v2h-2zM1444.7 700.1h2v2h-2zM1463.1 700.1h2v2h-2zM1481.4 700.1h2v2h-2zM1499.8 700.1h2v2h-2zM1518.1 700.1h2v2h-2zM1536.5 700.1h2v2h-2zM1554.8 700.1h2v2h-2zM1573.2 700.1h2v2h-2zM1591.5 700.1h2v2h-2zM1609.8 700.1h2v2h-2zM1628.2 700.1h2v2h-2zM1646.6 700.1h2v2h-2zM1664.9 700.1h2v2h-2zM1683.2 700.1h2v2h-2zM1701.6 700.1h2v2h-2zM1720.0 700.1h2v2h-2zM1738.3 700.1h2v2h-2zM1756.7 700.1h2v2h-2zM1775.0 700.1h2v2h-2zM1793.4 700.1h2v2h-2zM1811.7 700.1h2v2h-2zM674.0 720.6h2v2h-2zM692.4 720.6h2v2h-2zM710.7 720.6h2v2h-2zM729.0 720.6h2v2h-2zM747.4 720.6h2v2h-2zM765.8 720.6h2v2h-2zM784.1 720.6h2v2h-2zM802.5 720.6h2v2h-2zM820.8 720.6h2v2h-2zM839.1 720.6h2v2h-2zM857.5 720.6h2v2h-2zM875.9 720.6h2v2h-2zM894.2 720.6h2v2h-2zM912.5 720.6h2v2h-2zM930.9 720.6h2v2h-2zM949.2 720.6h2v2h-2zM967.6 720.6h2v2h-2zM986.0 720.6h2v2h-2zM1004.3 720.6h2v2h-2zM1022.7 720.6h2v2h-2zM1041.0 720.6h2v2h-2zM1059.3 720.6h2v2h-2zM1077.7 720.6h2v2h-2zM1096.0 720.6h2v2h-2zM1114.4 720.6h2v2h-2zM1132.8 720.6h2v2h-2zM1151.1 720.6h2v2h-2zM1169.5 720.6h2v2h-2zM1187.8 720.6h2v2h-2zM1206.2 720.6h2v2h-2zM1224.5 720.6h2v2h-2zM1242.8 720.6h2v2h-2zM1261.2 720.6h2v2h-2zM1279.6 720.6h2v2h-2zM1297.9 720.6h2v2h-2zM1316.2 720.6h2v2h-2zM1334.6 720.6h2v2h-2zM1353.0 720.6h2v2h-2zM1371.3 720.6h2v2h-2zM1389.7 720.6h2v2h-2zM1408.0 720.6h2v2h-2zM1426.3 720.6h2v2h-2zM1444.7 720.6h2v2h-2zM1463.1 720.6h2v2h-2zM1481.4 720.6h2v2h-2zM1499.8 720.6h2v2h-2zM1518.1 720.6h2v2h-2zM1536.5 720.6h2v2h-2zM1554.8 720.6h2v2h-2zM1573.2 720.6h2v2h-2zM1591.5 720.6h2v2h-2zM1609.8 720.6h2v2h-2zM1628.2 720.6h2v2h-2zM1646.6 720.6h2v2h-2zM1664.9 720.6h2v2h-2zM1683.2 720.6h2v2h-2zM1701.6 720.6h2v2h-2zM1720.0 720.6h2v2h-2zM1738.3 720.6h2v2h-2zM1756.7 720.6h2v2h-2zM1775.0 720.6h2v2h-2zM1793.4 720.6h2v2h-2zM1811.7 720.6h2v2h-2zM674.0 741.0h2v2h-2zM692.4 741.0h2v2h-2zM710.7 741.0h2v2h-2zM729.0 741.0h2v2h-2zM747.4 741.0h2v2h-2zM765.8 741.0h2v2h-2zM784.1 741.0h2v2h-2zM802.5 741.0h2v2h-2zM820.8 741.0h2v2h-2zM839.1 741.0h2v2h-2zM857.5 741.0h2v2h-2zM875.9 741.0h2v2h-2zM894.2 741.0h2v2h-2zM912.5 741.0h2v2h-2zM930.9 741.0h2v2h-2zM949.2 741.0h2v2h-2zM967.6 741.0h2v2h-2zM986.0 741.0h2v2h-2zM1004.3 741.0h2v2h-2zM1022.7 741.0h2v2h-2zM1041.0 741.0h2v2h-2zM1059.3 741.0h2v2h-2zM1077.7 741.0h2v2h-2zM1096.0 741.0h2v2h-2zM1114.4 741.0h2v2h-2zM1132.8 741.0h2v2h-2zM1151.1 741.0h2v2h-2zM1169.5 741.0h2v2h-2zM1187.8 741.0h2v2h-2zM1206.2 741.0h2v2h-2zM1224.5 741.0h2v2h-2zM1242.8 741.0h2v2h-2zM1261.2 741.0h2v2h-2zM1279.6 741.0h2v2h-2zM1297.9 741.0h2v2h-2zM1316.2 741.0h2v2h-2zM1334.6 741.0h2v2h-2zM1353.0 741.0h2v2h-2zM1371.3 741.0h2v2h-2zM1389.7 741.0h2v2h-2zM1408.0 741.0h2v2h-2zM1426.3 741.0h2v2h-2zM1444.7 741.0h2v2h-2zM1463.1 741.0h2v2h-2zM1481.4 741.0h2v2h-2zM1499.8 741.0h2v2h-2zM1518.1 741.0h2v2h-2zM1536.5 741.0h2v2h-2zM1554.8 741.0h2v2h-2zM1573.2 741.0h2v2h-2zM1591.5 741.0h2v2h-2zM1609.8 741.0h2v2h-2zM1628.2 741.0h2v2h-2zM1646.6 741.0h2v2h-2zM1664.9 741.0h2v2h-2zM1683.2 741.0h2v2h-2zM1701.6 741.0h2v2h-2zM1720.0 741.0h2v2h-2zM1738.3 741.0h2v2h-2zM1756.7 741.0h2v2h-2zM1775.0 741.0h2v2h-2zM1793.4 741.0h2v2h-2zM1811.7 741.0h2v2h-2zM674.0 761.4h2v2h-2zM692.4 761.4h2v2h-2zM710.7 761.4h2v2h-2zM729.0 761.4h2v2h-2zM747.4 761.4h2v2h-2zM765.8 761.4h2v2h-2zM784.1 761.4h2v2h-2zM802.5 761.4h2v2h-2zM820.8 761.4h2v2h-2zM839.1 761.4h2v2h-2zM857.5 761.4h2v2h-2zM875.9 761.4h2v2h-2zM894.2 761.4h2v2h-2zM912.5 761.4h2v2h-2zM930.9 761.4h2v2h-2zM949.2 761.4h2v2h-2zM967.6 761.4h2v2h-2zM986.0 761.4h2v2h-2zM1004.3 761.4h2v2h-2zM1022.7 761.4h2v2h-2zM1041.0 761.4h2v2h-2zM1059.3 761.4h2v2h-2zM1077.7 761.4h2v2h-2zM1096.0 761.4h2v2h-2zM1114.4 761.4h2v2h-2zM1132.8 761.4h2v2h-2zM1151.1 761.4h2v2h-2zM1169.5 761.4h2v2h-2zM1187.8 761.4h2v2h-2zM1206.2 761.4h2v2h-2zM1224.5 761.4h2v2h-2zM1242.8 761.4h2v2h-2zM1261.2 761.4h2v2h-2zM1279.6 761.4h2v2h-2zM1297.9 761.4h2v2h-2zM1316.2 761.4h2v2h-2zM1334.6 761.4h2v2h-2zM1353.0 761.4h2v2h-2zM1371.3 761.4h2v2h-2zM1389.7 761.4h2v2h-2zM1408.0 761.4h2v2h-2zM1426.3 761.4h2v2h-2zM1444.7 761.4h2v2h-2zM1463.1 761.4h2v2h-2zM1481.4 761.4h2v2h-2zM1499.8 761.4h2v2h-2zM1518.1 761.4h2v2h-2zM1536.5 761.4h2v2h-2zM1554.8 761.4h2v2h-2zM1573.2 761.4h2v2h-2zM1591.5 761.4h2v2h-2zM1609.8 761.4h2v2h-2zM1628.2 761.4h2v2h-2zM1646.6 761.4h2v2h-2zM1664.9 761.4h2v2h-2zM1683.2 761.4h2v2h-2zM1701.6 761.4h2v2h-2zM1720.0 761.4h2v2h-2zM1738.3 761.4h2v2h-2zM1756.7 761.4h2v2h-2zM1775.0 761.4h2v2h-2zM1793.4 761.4h2v2h-2zM1811.7 761.4h2v2h-2zM674.0 781.9h2v2h-2zM692.4 781.9h2v2h-2zM710.7 781.9h2v2h-2zM729.0 781.9h2v2h-2zM747.4 781.9h2v2h-2zM765.8 781.9h2v2h-2zM784.1 781.9h2v2h-2zM802.5 781.9h2v2h-2zM820.8 781.9h2v2h-2zM839.1 781.9h2v2h-2zM857.5 781.9h2v2h-2zM875.9 781.9h2v2h-2zM894.2 781.9h2v2h-2zM912.5 781.9h2v2h-2zM930.9 781.9h2v2h-2zM949.2 781.9h2v2h-2zM967.6 781.9h2v2h-2zM986.0 781.9h2v2h-2zM1004.3 781.9h2v2h-2zM1022.7 781.9h2v2h-2zM1041.0 781.9h2v2h-2zM1059.3 781.9h2v2h-2zM1077.7 781.9h2v2h-2zM1096.0 781.9h2v2h-2zM1114.4 781.9h2v2h-2zM1132.8 781.9h2v2h-2zM1151.1 781.9h2v2h-2zM1169.5 781.9h2v2h-2zM1187.8 781.9h2v2h-2zM1206.2 781.9h2v2h-2zM1224.5 781.9h2v2h-2zM1242.8 781.9h2v2h-2zM1261.2 781.9h2v2h-2zM1279.6 781.9h2v2h-2zM1297.9 781.9h2v2h-2zM1316.2 781.9h2v2h-2zM1334.6 781.9h2v2h-2zM1353.0 781.9h2v2h-2zM1371.3 781.9h2v2h-2zM1389.7 781.9h2v2h-2zM1408.0 781.9h2v2h-2zM1426.3 781.9h2v2h-2zM1444.7 781.9h2v2h-2zM1463.1 781.9h2v2h-2zM1481.4 781.9h2v2h-2zM1499.8 781.9h2v2h-2zM1518.1 781.9h2v2h-2zM1536.5 781.9h2v2h-2zM1554.8 781.9h2v2h-2zM1573.2 781.9h2v2h-2zM1591.5 781.9h2v2h-2zM1609.8 781.9h2v2h-2zM1628.2 781.9h2v2h-2zM1646.6 781.9h2v2h-2zM1664.9 781.9h2v2h-2zM1683.2 781.9h2v2h-2zM1701.6 781.9h2v2h-2zM1720.0 781.9h2v2h-2zM1738.3 781.9h2v2h-2zM1756.7 781.9h2v2h-2zM1775.0 781.9h2v2h-2zM1793.4 781.9h2v2h-2zM1811.7 781.9h2v2h-2zM674.0 802.3h2v2h-2zM692.4 802.3h2v2h-2zM710.7 802.3h2v2h-2zM729.0 802.3h2v2h-2zM747.4 802.3h2v2h-2zM765.8 802.3h2v2h-2zM784.1 802.3h2v2h-2zM802.5 802.3h2v2h-2zM820.8 802.3h2v2h-2zM839.1 802.3h2v2h-2zM857.5 802.3h2v2h-2zM875.9 802.3h2v2h-2zM894.2 802.3h2v2h-2zM912.5 802.3h2v2h-2zM930.9 802.3h2v2h-2zM949.2 802.3h2v2h-2zM967.6 802.3h2v2h-2zM986.0 802.3h2v2h-2zM1004.3 802.3h2v2h-2zM1022.7 802.3h2v2h-2zM1041.0 802.3h2v2h-2zM1059.3 802.3h2v2h-2zM1077.7 802.3h2v2h-2zM1096.0 802.3h2v2h-2zM1114.4 802.3h2v2h-2zM1132.8 802.3h2v2h-2zM1151.1 802.3h2v2h-2zM1169.5 802.3h2v2h-2zM1187.8 802.3h2v2h-2zM1206.2 802.3h2v2h-2zM1224.5 802.3h2v2h-2zM1242.8 802.3h2v2h-2zM1261.2 802.3h2v2h-2zM1279.6 802.3h2v2h-2zM1297.9 802.3h2v2h-2zM1316.2 802.3h2v2h-2zM1334.6 802.3h2v2h-2zM1353.0 802.3h2v2h-2zM1371.3 802.3h2v2h-2zM1389.7 802.3h2v2h-2zM1408.0 802.3h2v2h-2zM1426.3 802.3h2v2h-2zM1444.7 802.3h2v2h-2zM1463.1 802.3h2v2h-2zM1481.4 802.3h2v2h-2zM1499.8 802.3h2v2h-2zM1518.1 802.3h2v2h-2zM1536.5 802.3h2v2h-2zM1554.8 802.3h2v2h-2zM1573.2 802.3h2v2h-2zM1591.5 802.3h2v2h-2zM1609.8 802.3h2v2h-2zM1628.2 802.3h2v2h-2zM1646.6 802.3h2v2h-2zM1664.9 802.3h2v2h-2zM1683.2 802.3h2v2h-2zM1701.6 802.3h2v2h-2zM1720.0 802.3h2v2h-2zM1738.3 802.3h2v2h-2zM1756.7 802.3h2v2h-2zM1775.0 802.3h2v2h-2zM1793.4 802.3h2v2h-2zM1811.7 802.3h2v2h-2z" fill="#4a4a4a"/>
<path d="M674.00,803.30C687.28,803.30,700.56,803.30,713.83,803.30C727.11,803.30,740.39,803.30,753.67,803.30C766.95,803.30,780.22,803.30,793.50,803.30C806.78,803.30,820.06,803.30,833.34,803.30C846.61,803.30,859.89,803.30,873.17,803.30C886.45,803.30,899.73,803.30,913.00,803.30C926.28,803.30,939.56,803.30,952.84,803.30C966.12,803.30,979.39,803.30,992.67,803.30C1005.95,803.30,1019.23,803.30,1032.51,803.30C1045.78,803.30,1059.06,803.30,1072.34,803.30C1085.62,803.30,1098.90,803.30,1112.17,803.30C1125.45,803.30,1138.73,803.30,1152.01,803.30C1165.29,803.30,1178.56,803.30,1191.84,803.30C1205.12,803.30,1218.40,803.30,1231.68,803.30C1244.95,803.30,1258.23,803.30,1271.51,803.30C1284.79,803.30,1298.07,803.30,1311.34,803.30C1324.62,803.30,1337.90,803.29,1351.18,803.30C1364.46,803.31,1377.73,803.47,1391.01,803.37C1404.29,803.28,1417.57,806.00,1430.85,802.73C1444.12,799.45,1457.40,795.08,1470.68,783.72C1483.96,772.36,1497.24,765.27,1510.51,734.59C1523.79,703.90,1537.07,614.65,1550.35,599.60C1563.63,584.55,1576.90,634.85,1590.18,644.29C1603.46,653.72,1616.74,656.29,1630.02,656.22C1643.29,656.14,1656.57,643.24,1669.85,643.83C1683.13,644.42,1696.41,651.62,1709.68,659.78C1722.96,667.93,1736.24,689.86,1749.52,692.75C1762.80,695.63,1776.07,673.25,1789.35,677.09C1802.63,680.92,1815.91,709.30,1829.19,715.74L1829.19,803.3L674.00,803.3Z" fill="url(#gfill)"/>
<path d="M674.00,803.30C687.28,803.30,700.56,803.30,713.83,803.30C727.11,803.30,740.39,803.30,753.67,803.30C766.95,803.30,780.22,803.30,793.50,803.30C806.78,803.30,820.06,803.30,833.34,803.30C846.61,803.30,859.89,803.30,873.17,803.30C886.45,803.30,899.73,803.30,913.00,803.30C926.28,803.30,939.56,803.30,952.84,803.30C966.12,803.30,979.39,803.30,992.67,803.30C1005.95,803.30,1019.23,803.30,1032.51,803.30C1045.78,803.30,1059.06,803.30,1072.34,803.30C1085.62,803.30,1098.90,803.30,1112.17,803.30C1125.45,803.30,1138.73,803.30,1152.01,803.30C1165.29,803.30,1178.56,803.30,1191.84,803.30C1205.12,803.30,1218.40,803.30,1231.68,803.30C1244.95,803.30,1258.23,803.30,1271.51,803.30C1284.79,803.30,1298.07,803.30,1311.34,803.30C1324.62,803.30,1337.90,803.29,1351.18,803.30C1364.46,803.31,1377.73,803.47,1391.01,803.37C1404.29,803.28,1417.57,806.00,1430.85,802.73C1444.12,799.45,1457.40,795.08,1470.68,783.72C1483.96,772.36,1497.24,765.27,1510.51,734.59C1523.79,703.90,1537.07,614.65,1550.35,599.60C1563.63,584.55,1576.90,634.85,1590.18,644.29C1603.46,653.72,1616.74,656.29,1630.02,656.22C1643.29,656.14,1656.57,643.24,1669.85,643.83C1683.13,644.42,1696.41,651.62,1709.68,659.78C1722.96,667.93,1736.24,689.86,1749.52,692.75C1762.80,695.63,1776.07,673.25,1789.35,677.09C1802.63,680.92,1815.91,709.30,1829.19,715.74" fill="none" stroke="#e8793a" stroke-width="4.6" stroke-linejoin="round" stroke-linecap="round"/>
</svg>

<div class="a" style="left:732.3px;width:400px;text-align:center;top:837.29px;font-size:18.8px;line-height:18.8px;color:#8e8e8e;-webkit-text-stroke:0.2px #8e8e8e;white-space:nowrap;">Jun 4</div>
<div class="a" style="left:1051px;width:400px;text-align:center;top:837.29px;font-size:18.8px;line-height:18.8px;color:#8e8e8e;-webkit-text-stroke:0.2px #8e8e8e;white-space:nowrap;">Jun 12</div>
<div class="a" style="left:1370px;width:400px;text-align:center;top:837.29px;font-size:18.8px;line-height:18.8px;color:#8e8e8e;-webkit-text-stroke:0.2px #8e8e8e;white-space:nowrap;">Jun 20</div>
<div class="card" style="left:638px;top:905px;width:605.5px;height:108.5px"></div>
<div class="a" style="left:666px;top:933px;width:53px;height:52.5px;border-radius:12px;background:#262626"></div>
<svg class="ico" style="left:676px;top:940px" width="34" height="36" viewBox="676 940 34 36"><path d="M692.2 947 C697.5 950.2 702.6 955 702.6 961.3 C702.6 967.2 698.2 971.5 692.7 971.5 C687.1 971.5 682.7 967.2 682.7 961.5 C682.7 957.3 685 954 688 951.8 C688.6 954.5 689.2 957.6 690.4 958.7 C691.2 957.5 691.6 954 691.6 951.2 Z" fill="#e87b37"/></svg>
<div class="a" style="left:742.8px;top:944.14px;font-size:28.3px;line-height:28.3px;color:#f4f4f4;-webkit-text-stroke:1.2px #f4f4f4;white-space:nowrap;">Online</div>
<div class="a" style="left:608px;width:600px;text-align:right;top:944.82px;font-size:27.5px;line-height:27.5px;color:#f4f4f4;-webkit-text-stroke:1.2px #f4f4f4;white-space:nowrap;">2</div>
<div class="card" style="left:1260.4px;top:905px;width:604.6px;height:108.5px"></div>
<div class="a" style="left:1288px;top:933px;width:53px;height:52.5px;border-radius:12px;background:#262626"></div>
<svg class="ico" style="left:1298px;top:940px" width="34" height="36" viewBox="1298 940 34 36"><path d="M1305.8 947.5 L1307.9 949.2 H1324.3 L1321 957.2 L1324.3 964.9 H1307.9 V970.8 Q1307.9 971.6 1306.9 971.6 Q1305.8 971.6 1305.8 970.8 Z" fill="#5ec46c"/></svg>
<div class="a" style="left:1365px;top:944.06px;font-size:28.4px;line-height:28.4px;color:#f4f4f4;-webkit-text-stroke:1.2px #f4f4f4;white-space:nowrap;">Activation Rate</div>
<div class="a" style="left:1229px;width:600px;text-align:right;top:944.82px;font-size:27.5px;line-height:27.5px;color:#f4f4f4;-webkit-text-stroke:1.2px #f4f4f4;white-space:nowrap;">0.0%</div>
<div class="card" style="left:638px;top:1030px;width:1227px;height:400px"></div>
<!--MAPSTART--><svg class="a" style="left:639.5px;top:1031px" width="1224" height="330" viewBox="639.5 1031 1224 330"><path d="M862.4 1038.1L874.3 1044.2L889.2 1046.4L901.6 1050.8L909.1 1051.5L916.5 1055.7L926.5 1050.8L933.9 1047.9L943.9 1052.2L958.8 1057.7L968.7 1061.8L978.7 1063.1L988.6 1059.7L1001.0 1062.4L1011.0 1065.7L1015.4 1057.7L1020.9 1050.8L1027.1 1059.7L1034.6 1064.4L1039.5 1057.0L1045.7 1051.5L1049.5 1059.7L1042.0 1069.5L1037.0 1077.5L1034.3 1085.1L1024.6 1092.9L1016.9 1104.9L1017.9 1113.8L1022.6 1120.8L1032.1 1125.3L1040.8 1129.8L1047.5 1129.8L1047.7 1138.2L1053.9 1145.6L1056.4 1140.7L1055.2 1131.5L1061.4 1124.0L1057.4 1114.7L1058.2 1103.4L1058.7 1095.1L1065.6 1096.7L1073.1 1101.4L1079.0 1107.9L1080.5 1114.3L1086.7 1113.3L1091.5 1106.0L1095.4 1113.8L1099.2 1123.5L1104.1 1129.3L1110.9 1135.7L1113.3 1142.4L1110.6 1145.6L1102.9 1150.3L1087.2 1150.3L1082.3 1154.1L1092.2 1156.8L1090.5 1162.3L1093.0 1164.8L1099.2 1166.6L1101.9 1162.7L1100.4 1168.8L1092.2 1172.3L1088.7 1174.7L1085.8 1170.5L1085.0 1168.8L1081.0 1171.9L1077.6 1174.3L1076.1 1177.1L1077.8 1179.8L1078.0 1181.1L1074.3 1181.4L1071.8 1182.7L1068.4 1184.4L1067.9 1186.3L1065.9 1189.9L1064.1 1188.6L1065.4 1191.8L1063.1 1194.9L1062.9 1196.2L1064.4 1201.4L1061.9 1203.2L1058.2 1205.3L1054.2 1208.3L1051.0 1211.0L1049.7 1214.7L1051.5 1220.2L1053.2 1225.8L1052.2 1229.9L1049.0 1228.3L1046.7 1223.8L1045.7 1219.3L1042.8 1216.7L1039.3 1216.5L1034.6 1215.6L1031.1 1215.6L1030.1 1219.0L1025.1 1217.9L1018.9 1217.6L1016.4 1218.8L1011.0 1222.4L1010.5 1228.0L1009.2 1232.1L1009.0 1237.6L1010.2 1240.8L1012.7 1244.7L1013.7 1247.1L1016.9 1249.0L1023.4 1247.9L1026.4 1245.8L1027.6 1241.0L1034.8 1240.2L1035.8 1242.9L1033.8 1248.4L1032.6 1250.8L1031.1 1254.9L1037.8 1255.2L1045.0 1257.3L1044.5 1263.6L1044.0 1267.7L1047.0 1271.0L1050.0 1272.0L1053.9 1271.2L1057.4 1272.3L1059.7 1273.5L1062.6 1271.2L1066.1 1267.5L1071.1 1266.4L1073.8 1263.9L1074.8 1265.9L1074.1 1268.7L1073.6 1272.5L1074.1 1267.5L1077.6 1266.4L1084.0 1268.7L1092.2 1268.5L1098.2 1268.2L1099.9 1270.5L1103.4 1273.8L1108.1 1278.0L1114.6 1280.3L1118.3 1281.0L1123.8 1283.8L1126.0 1288.7L1127.3 1293.7L1131.5 1296.9L1136.4 1298.2L1143.2 1301.2L1151.4 1302.2L1158.1 1306.2L1164.0 1307.9L1165.5 1315.2L1161.8 1320.7L1156.3 1327.5L1155.1 1334.0L1153.3 1341.0L1150.4 1349.7L1143.9 1353.7L1137.7 1356.4L1127.8 1373.2L1117.8 1387.9L1073.1 1387.9L1074.1 1373.2L1076.8 1356.4L1077.3 1341.5L1073.1 1338.6L1064.9 1333.4L1062.4 1328.8L1060.2 1324.5L1055.4 1315.9L1050.5 1310.1L1050.0 1305.7L1052.2 1301.4L1051.0 1300.4L1051.7 1297.4L1055.7 1292.0L1058.9 1288.2L1059.9 1285.0L1059.9 1280.3L1058.7 1276.3L1057.2 1274.3L1052.5 1276.8L1049.5 1274.8L1045.7 1274.5L1043.3 1272.0L1039.3 1270.2L1038.8 1266.9L1035.6 1263.9L1034.3 1261.9L1029.6 1261.4L1025.9 1260.1L1022.1 1258.0L1018.4 1255.2L1012.2 1254.7L1004.7 1252.6L999.0 1250.0L994.8 1248.7L991.1 1246.1L990.1 1242.6L990.3 1240.2L987.3 1235.7L983.6 1231.3L980.1 1229.1L977.4 1225.0L975.7 1222.4L972.7 1218.5L970.9 1214.4L966.7 1211.8L967.2 1215.3L970.0 1219.6L973.7 1225.2L976.9 1230.8L979.9 1235.9L978.4 1236.5L975.4 1232.7L972.9 1228.0L968.0 1223.6L968.5 1221.0L964.2 1216.7L962.0 1211.5L960.8 1209.2L957.8 1205.6L952.8 1203.8L950.6 1200.2L949.1 1196.5L947.6 1193.4L944.6 1189.9L942.9 1185.0L943.4 1179.8L943.1 1175.0L944.1 1165.2L942.4 1159.0L942.1 1157.1L946.8 1158.3L946.3 1154.9L941.4 1151.1L934.9 1147.9L934.2 1141.9L928.5 1135.3L929.0 1130.6L922.7 1124.0L915.3 1116.2L907.8 1111.4L900.4 1107.9L889.2 1106.0L883.0 1108.4L875.8 1103.9L874.8 1110.9L871.3 1114.3L865.6 1119.0L860.4 1122.2L851.9 1128.0L845.7 1131.1L842.2 1132.8L849.4 1129.3L856.9 1123.1L860.6 1116.2L861.9 1113.8L853.2 1114.3L846.9 1108.9L841.2 1104.4L839.5 1098.3L843.5 1090.7L850.7 1089.1L851.4 1083.4L842.0 1084.0L834.5 1076.9L844.5 1072.0L845.2 1067.6L839.0 1060.4L842.0 1055.7L847.2 1049.3L855.6 1042.7L862.4 1038.1M1110.4 1024.3L1114.1 1036.6L1115.8 1043.4L1125.3 1052.9L1121.5 1058.4L1118.6 1068.2L1121.5 1077.5L1123.5 1085.1L1127.8 1092.9L1132.0 1102.4L1140.2 1107.0L1142.9 1108.4L1145.1 1104.9L1146.4 1099.8L1149.6 1091.8L1153.1 1082.8L1158.8 1077.5L1165.0 1072.0L1171.2 1063.1L1178.7 1057.7L1189.9 1051.5L1196.1 1044.2L1197.3 1032.6L1197.3 1024.3M1193.6 1072.0L1191.6 1076.9L1196.1 1081.1L1195.6 1086.2L1204.8 1089.6L1213.5 1086.8L1217.7 1081.1L1216.0 1074.5L1211.5 1071.4L1206.0 1073.3L1198.6 1073.3L1193.6 1072.0M1053.2 1024.3L1073.1 1034.2L1081.8 1045.7L1088.0 1058.4L1096.7 1068.2L1091.7 1079.3L1091.5 1087.4L1089.7 1094.0L1085.5 1095.6L1081.8 1090.2L1076.8 1084.5L1068.6 1077.5L1059.4 1084.0L1058.2 1078.7L1064.4 1067.6L1059.4 1059.7L1056.9 1049.3L1045.7 1045.7L1038.3 1050.0L1035.8 1036.6L1030.8 1024.3M1035.8 1083.4L1038.3 1088.5L1047.0 1092.9L1050.7 1089.6L1052.0 1085.1L1044.5 1076.3L1037.0 1079.3L1035.8 1083.4M1050.2 1235.7L1055.7 1237.0L1061.9 1240.2L1063.9 1241.3L1067.6 1244.0L1059.4 1244.5L1057.4 1242.4L1051.7 1240.0L1047.0 1239.4L1041.0 1239.2L1043.3 1237.3L1050.2 1235.7M1071.6 1244.5L1078.0 1245.0L1080.5 1246.9L1082.3 1248.4L1076.8 1249.0L1074.1 1249.2L1067.1 1248.7L1071.6 1247.9L1071.6 1244.5M1057.4 1248.2L1062.4 1249.0L1060.7 1249.7L1057.4 1248.4L1057.4 1248.2M1085.0 1248.2L1089.0 1248.4L1088.2 1249.5L1085.0 1249.5L1085.0 1248.2M1057.7 1225.8L1060.7 1226.6L1059.2 1230.2L1057.7 1225.8M1316.1 1039.7L1309.2 1043.4L1299.2 1047.9L1291.8 1055.0L1288.0 1061.8L1285.5 1068.2L1283.1 1074.5L1278.1 1083.4L1274.4 1089.6L1265.7 1096.1L1264.4 1102.4L1265.2 1109.9L1268.2 1116.2L1272.4 1116.6L1276.4 1112.3L1278.3 1109.4L1279.8 1112.8L1281.3 1118.5L1283.3 1124.0L1284.3 1128.9L1288.5 1126.2L1291.8 1125.3L1293.3 1119.4L1293.7 1113.8L1297.7 1110.4L1298.2 1106.0L1295.0 1100.9L1296.5 1094.0L1301.5 1087.9L1304.9 1080.5L1309.2 1075.7L1314.9 1081.1L1309.7 1086.2L1305.4 1091.3L1304.9 1097.7L1304.9 1104.9L1307.9 1107.5L1315.4 1106.0L1321.1 1104.4L1325.3 1107.5L1327.0 1107.9L1321.6 1110.4L1314.1 1109.9L1310.1 1111.9L1310.4 1115.7L1312.4 1117.1L1312.6 1119.9L1310.4 1121.7L1306.7 1119.0L1304.2 1122.6L1304.4 1127.6L1304.2 1130.6L1301.0 1133.2L1298.5 1132.8L1297.5 1131.5L1292.5 1133.2L1287.3 1135.3L1285.5 1134.5L1279.6 1132.8L1279.1 1134.9L1276.8 1133.2L1276.6 1131.1L1276.1 1128.4L1277.8 1123.5L1278.3 1118.5L1273.1 1121.3L1272.1 1124.0L1272.1 1128.9L1273.4 1131.1L1274.1 1134.9L1272.1 1136.6L1269.1 1137.4L1265.4 1138.2L1263.4 1141.1L1261.9 1143.6L1260.4 1145.6L1258.2 1146.4L1256.0 1147.5L1255.5 1150.7L1252.2 1153.0L1250.0 1153.7L1248.5 1152.2L1247.3 1152.2L1248.3 1156.4L1244.5 1156.0L1240.3 1156.8L1243.3 1159.7L1245.8 1161.2L1249.0 1165.2L1249.0 1169.5L1248.3 1174.7L1244.5 1175.0L1238.3 1174.7L1232.1 1174.0L1228.9 1176.7L1229.9 1179.8L1230.4 1183.1L1228.9 1188.0L1228.4 1190.5L1230.1 1191.5L1229.9 1195.9L1233.4 1195.9L1236.3 1197.4L1238.1 1199.0L1241.1 1196.8L1246.5 1196.8L1250.0 1194.0L1252.5 1190.5L1251.3 1188.3L1253.0 1185.7L1254.0 1184.1L1257.5 1182.1L1260.0 1178.4L1259.7 1176.4L1263.2 1175.0L1267.4 1176.0L1269.9 1174.7L1271.4 1173.6L1274.1 1171.6L1276.4 1172.6L1277.6 1174.7L1279.8 1178.4L1283.8 1181.7L1287.3 1183.7L1290.5 1186.3L1292.3 1189.6L1290.8 1192.7L1292.5 1191.8L1294.2 1189.9L1293.0 1186.0L1295.5 1184.7L1298.0 1186.0L1295.7 1183.7L1291.8 1181.1L1289.3 1179.8L1286.8 1176.7L1283.1 1173.3L1282.6 1171.2L1282.6 1168.4L1284.3 1167.4L1286.3 1167.0L1285.8 1169.1L1287.5 1169.8L1289.8 1172.3L1292.5 1174.7L1295.5 1176.7L1298.2 1178.4L1300.0 1180.1L1300.2 1183.1L1300.2 1185.7L1302.2 1187.6L1303.4 1190.2L1305.2 1191.8L1304.9 1194.0L1305.9 1196.5L1307.9 1197.7L1308.9 1195.9L1309.7 1194.3L1311.6 1192.7L1308.7 1190.5L1308.9 1188.0L1308.2 1185.4L1310.9 1184.4L1313.1 1183.4L1316.9 1183.4L1318.3 1184.4L1317.1 1185.7L1317.6 1188.3L1317.4 1191.5L1319.6 1194.0L1320.6 1196.2L1323.6 1197.1L1326.8 1198.3L1328.3 1196.2L1331.5 1197.1L1334.0 1198.6L1337.2 1197.4L1341.0 1196.5L1342.0 1198.0L1341.2 1199.6L1341.2 1203.2L1340.2 1205.3L1339.2 1207.7L1338.5 1210.4L1337.0 1213.0L1332.3 1213.6L1329.0 1213.0L1326.5 1212.7L1325.6 1213.6L1322.3 1214.2L1319.8 1213.0L1314.4 1211.8L1309.7 1209.5L1306.7 1208.3L1303.9 1209.8L1301.7 1211.8L1300.7 1215.6L1298.2 1214.7L1295.2 1213.3L1290.8 1212.1L1289.8 1210.1L1284.3 1208.6L1280.3 1207.4L1279.1 1205.6L1278.8 1203.5L1279.3 1200.5L1278.3 1197.4L1277.3 1195.2L1275.6 1194.9L1272.9 1196.2L1269.1 1196.2L1264.4 1196.5L1260.0 1196.8L1255.7 1197.4L1252.0 1199.6L1248.8 1201.1L1246.5 1201.7L1243.1 1201.4L1238.6 1199.3L1237.1 1199.9L1235.6 1203.8L1233.4 1206.5L1229.9 1208.9L1227.6 1212.4L1227.9 1215.6L1226.9 1218.2L1223.7 1221.3L1219.9 1223.3L1217.7 1226.1L1214.5 1232.1L1212.5 1234.6L1211.2 1238.1L1209.8 1241.6L1211.5 1244.2L1211.7 1246.9L1212.2 1250.8L1211.0 1254.7L1208.5 1258.0L1210.3 1261.1L1210.5 1263.6L1212.7 1265.7L1214.7 1267.7L1216.7 1270.0L1218.9 1272.0L1219.2 1274.3L1221.7 1277.0L1224.7 1279.0L1227.6 1281.8L1232.9 1284.0L1237.1 1282.3L1242.1 1282.0L1247.0 1282.5L1250.0 1281.3L1254.5 1280.0L1258.2 1279.3L1263.2 1279.0L1265.7 1282.5L1268.2 1284.3L1271.9 1284.0L1274.4 1283.8L1275.9 1285.3L1276.4 1288.0L1275.4 1292.2L1275.1 1295.0L1274.9 1298.7L1276.8 1301.9L1279.6 1304.7L1281.8 1307.4L1282.6 1309.9L1284.3 1312.9L1284.8 1317.2L1285.8 1319.9L1286.3 1323.7L1285.3 1326.3L1283.1 1330.1L1281.3 1336.5L1281.3 1340.4L1285.3 1348.4L1288.0 1356.4L1291.8 1373.2L1301.7 1387.9L1319.1 1387.9L1329.0 1373.2L1333.8 1360.5L1339.0 1358.3L1339.7 1349.7L1338.5 1345.2L1343.4 1340.4L1350.2 1336.5L1353.1 1333.2L1352.6 1326.3L1352.4 1320.9L1349.7 1314.9L1348.7 1310.4L1349.4 1306.7L1351.9 1302.4L1353.6 1300.4L1356.4 1297.4L1361.3 1292.5L1365.1 1290.0L1370.3 1285.0L1373.8 1280.0L1376.2 1275.0L1378.2 1269.0L1379.2 1265.4L1375.0 1266.9L1366.3 1268.7L1362.6 1268.5L1359.6 1266.2L1359.1 1263.1L1356.4 1260.8L1352.6 1257.3L1349.9 1253.9L1347.2 1248.2L1344.7 1244.2L1343.7 1238.9L1340.5 1234.9L1338.0 1229.4L1336.2 1225.2L1334.0 1221.0L1333.0 1217.0L1334.8 1220.2L1337.2 1223.0L1338.5 1219.6L1339.0 1218.2L1339.0 1222.4L1341.7 1226.6L1344.4 1230.8L1347.7 1234.9L1349.2 1238.9L1352.6 1244.2L1355.1 1249.5L1358.1 1253.9L1358.9 1258.5L1360.1 1263.1L1363.8 1263.4L1370.0 1261.4L1373.5 1259.3L1377.5 1257.3L1381.7 1254.7L1384.5 1252.6L1391.2 1250.3L1393.6 1247.4L1395.6 1243.7L1399.4 1240.2L1400.6 1237.6L1397.9 1234.6L1394.4 1232.7L1392.2 1229.4L1391.9 1227.2L1389.9 1230.2L1386.2 1233.0L1381.2 1233.5L1379.7 1231.3L1379.2 1227.7L1378.2 1230.8L1376.2 1227.5L1375.3 1225.2L1372.5 1221.0L1371.0 1218.8L1371.3 1216.7L1374.0 1216.5L1377.2 1218.8L1379.5 1223.0L1384.5 1225.5L1388.7 1226.3L1393.1 1225.0L1394.6 1228.8L1400.1 1229.7L1405.3 1230.2L1409.8 1229.9L1417.3 1231.0L1419.5 1233.0L1421.7 1234.6L1425.5 1236.7L1425.0 1240.8L1428.4 1242.4L1432.4 1240.8L1432.9 1243.2L1432.9 1246.9L1434.2 1252.1L1435.6 1257.3L1437.9 1262.9L1440.1 1267.5L1441.9 1272.5L1444.6 1274.8L1446.8 1272.5L1450.3 1269.2L1450.3 1266.2L1451.5 1262.1L1451.0 1257.0L1453.8 1253.9L1459.0 1250.3L1463.5 1245.5L1467.9 1242.1L1470.2 1240.0L1473.2 1238.9L1476.9 1239.4L1479.4 1236.7L1480.6 1238.1L1481.4 1242.1L1484.8 1246.9L1486.3 1250.8L1486.8 1254.7L1489.1 1255.2L1494.3 1253.4L1495.0 1257.3L1496.8 1262.4L1497.3 1268.7L1496.3 1274.3L1499.5 1277.5L1501.2 1280.0L1502.0 1285.0L1505.0 1288.7L1509.2 1291.5L1510.9 1290.2L1508.9 1285.5L1506.2 1280.0L1502.7 1277.5L1501.0 1273.8L1498.8 1270.0L1500.3 1263.6L1501.2 1261.1L1504.2 1263.4L1507.0 1264.9L1508.2 1267.5L1511.2 1268.7L1512.4 1273.3L1516.7 1270.5L1518.4 1268.2L1523.1 1266.2L1523.6 1261.1L1522.1 1256.0L1518.4 1252.1L1514.9 1248.2L1516.2 1244.2L1518.6 1241.6L1521.6 1240.2L1524.9 1240.0L1526.6 1242.6L1529.8 1239.2L1533.6 1238.1L1536.5 1237.3L1541.5 1235.9L1545.7 1232.1L1549.2 1229.4L1550.2 1225.8L1552.7 1222.4L1554.9 1218.2L1554.9 1214.2L1552.7 1211.5L1552.2 1208.0L1549.0 1203.5L1549.5 1201.1L1552.2 1199.0L1556.4 1195.9L1552.7 1194.3L1548.5 1195.6L1547.2 1193.4L1544.5 1190.8L1545.7 1188.9L1548.7 1187.3L1552.2 1184.4L1554.9 1183.4L1554.2 1186.3L1553.4 1189.6L1555.9 1187.0L1560.9 1186.0L1562.1 1187.6L1562.9 1189.9L1563.4 1193.7L1566.4 1195.2L1566.4 1199.0L1565.9 1202.9L1568.8 1203.5L1572.6 1201.7L1573.6 1198.3L1573.3 1194.3L1570.8 1190.8L1568.8 1186.7L1574.3 1183.4L1576.8 1178.4L1579.5 1177.1L1582.8 1175.4L1588.2 1171.9L1592.4 1166.6L1596.4 1161.6L1600.4 1157.1L1601.1 1151.1L1601.9 1146.0L1603.1 1141.1L1603.4 1137.8L1599.9 1135.7L1594.4 1133.6L1588.0 1132.3L1591.0 1128.9L1596.2 1121.7L1602.4 1114.7L1606.9 1110.9L1614.8 1110.9L1622.0 1109.9L1629.7 1108.9L1635.4 1111.9L1641.4 1101.4L1649.6 1098.8L1649.1 1106.0L1642.1 1110.4L1641.4 1118.0L1639.4 1126.2L1638.7 1134.9L1640.9 1143.2L1641.4 1147.2L1645.4 1143.6L1649.6 1139.1L1654.1 1132.8L1654.8 1129.3L1657.8 1125.3L1656.6 1118.0L1661.3 1112.8L1662.0 1107.5L1667.0 1105.5L1674.5 1102.4L1684.0 1099.0L1697.5 1095.0L1693.0 1083.0L1699.3 1081.0L1699.3 1055.5L1687.0 1048.7L1675.0 1048.0L1673.5 1057.0L1667.5 1051.0L1649.5 1051.0L1645.0 1041.0L1631.5 1041.0L1622.5 1031.5L1618.0 1020.0L1599.9 1024.3L1575.0 1029.3L1550.2 1024.3L1525.3 1024.3L1517.9 1026.0L1510.4 1032.6L1500.5 1024.3L1450.8 1024.3L1452.0 1032.6L1447.1 1040.4L1437.1 1032.6L1432.2 1024.3L1423.5 1024.3L1423.5 1036.6L1421.0 1058.4L1417.3 1060.4L1412.3 1055.7L1401.1 1051.5L1386.2 1059.7L1376.2 1061.8L1361.8 1068.9L1356.4 1074.5L1351.4 1071.4L1352.6 1081.6L1346.4 1084.5L1340.2 1077.5L1335.2 1070.8L1332.3 1067.6L1336.5 1069.5L1343.9 1072.6L1353.9 1068.2L1351.4 1061.1L1345.2 1055.7L1337.7 1052.9L1329.0 1048.6L1323.6 1047.1L1320.3 1040.4L1316.1 1039.7M804.7 1055.5L813.4 1063.1L823.3 1070.8L830.0 1074.5L825.8 1078.7L804.7 1081.0L804.7 1055.5M1324.1 1182.4L1321.6 1180.1L1320.8 1177.4L1323.1 1174.0L1325.3 1170.2L1325.8 1168.4L1328.5 1164.5L1331.0 1163.8L1332.8 1165.9L1332.8 1168.4L1335.2 1171.2L1339.5 1169.8L1342.7 1168.4L1340.2 1165.2L1345.2 1162.3L1348.9 1161.6L1346.9 1163.8L1345.7 1167.7L1343.4 1169.1L1346.4 1171.2L1350.9 1174.7L1355.1 1178.1L1355.1 1181.4L1350.9 1183.1L1343.9 1182.1L1340.2 1180.8L1336.5 1179.8L1331.5 1181.4L1326.5 1182.4L1324.1 1182.4M1380.0 1162.3L1373.8 1164.1L1370.3 1167.7L1370.0 1171.9L1370.0 1176.4L1372.8 1180.4L1376.5 1185.0L1374.5 1188.6L1373.5 1191.5L1374.0 1194.3L1378.2 1196.5L1385.7 1196.2L1385.9 1194.6L1384.7 1191.2L1383.7 1186.3L1383.2 1182.4L1383.0 1179.1L1378.7 1173.6L1377.2 1170.9L1383.2 1168.4L1384.0 1163.4L1380.0 1162.3M1384.9 1020.0L1382.0 1029.3L1380.0 1037.3L1384.9 1043.4L1394.1 1042.7L1389.9 1036.6L1390.7 1028.5L1393.6 1020.0M1244.3 1114.3L1239.6 1114.7L1237.6 1119.0L1236.8 1123.1L1238.1 1126.2L1237.8 1129.3L1239.6 1131.5L1243.3 1131.9L1244.5 1134.9L1244.3 1137.4L1240.6 1137.8L1240.3 1139.9L1241.3 1142.8L1239.1 1144.4L1242.8 1144.8L1244.5 1146.0L1241.6 1146.4L1240.1 1148.7L1237.8 1150.7L1241.1 1150.3L1243.6 1148.7L1247.3 1148.7L1250.0 1147.9L1253.5 1147.9L1255.5 1146.8L1254.0 1145.2L1255.5 1143.2L1256.2 1139.9L1252.7 1139.1L1252.2 1136.6L1250.5 1133.2L1248.3 1130.2L1244.8 1126.2L1245.5 1124.0L1247.5 1119.4L1242.6 1118.5L1242.6 1116.6L1244.3 1114.3M1233.9 1129.8L1237.6 1132.3L1236.6 1134.9L1236.8 1137.8L1236.1 1142.4L1230.9 1144.8L1227.4 1144.8L1228.1 1140.7L1226.9 1137.4L1227.2 1134.1L1231.1 1132.3L1233.9 1129.8M1275.1 1182.4L1275.9 1189.2L1273.1 1189.9L1272.4 1183.7L1275.1 1182.4M1275.4 1176.4L1274.9 1181.7L1273.6 1180.8L1275.4 1176.4M1290.8 1191.8L1289.5 1196.8L1282.8 1194.0L1283.6 1192.1L1290.8 1191.8M1310.6 1200.2L1317.4 1201.4L1313.4 1202.3L1310.6 1200.2M1338.0 1200.2L1334.0 1203.2L1332.3 1202.3L1338.0 1200.2M1451.0 1270.5L1454.0 1273.8L1455.5 1277.5L1453.8 1280.0L1451.0 1279.5L1450.3 1274.5L1451.0 1270.5M1374.5 1325.0L1377.0 1334.0L1374.8 1340.4L1371.3 1351.0L1368.8 1359.2L1364.3 1359.7L1360.6 1355.1L1359.6 1349.7L1361.3 1340.4L1364.6 1335.2L1368.8 1334.0L1371.3 1328.8L1374.5 1325.0M1603.4 1181.7L1603.9 1184.7L1604.9 1188.6L1602.9 1191.8L1602.1 1195.9L1601.9 1199.9L1599.4 1202.0L1596.9 1203.2L1592.4 1203.2L1589.5 1206.5L1587.5 1204.1L1582.5 1205.0L1581.3 1206.5L1577.5 1205.3L1574.1 1207.1L1574.8 1210.1L1575.8 1213.9L1578.3 1213.0L1579.8 1208.6L1579.8 1205.3L1577.5 1203.8L1581.5 1201.1L1586.2 1200.2L1589.5 1200.2L1591.7 1196.2L1592.9 1194.3L1593.7 1196.5L1597.4 1193.0L1599.7 1188.9L1599.7 1184.4L1603.4 1181.7M1586.5 1204.1L1585.5 1207.1L1582.3 1208.6L1582.3 1205.3L1586.5 1204.1M1604.6 1167.7L1607.4 1171.2L1613.8 1175.4L1609.8 1176.7L1608.1 1179.8L1602.4 1178.1L1599.9 1181.1L1599.4 1178.1L1600.9 1175.4L1604.1 1171.2L1604.6 1167.7M1606.4 1133.6L1607.9 1139.1L1608.1 1151.1L1606.4 1158.6L1608.6 1165.6L1604.9 1165.9L1604.9 1156.8L1605.1 1145.2L1606.4 1133.6M1554.2 1229.9L1554.2 1233.5L1552.2 1238.9L1550.7 1236.7L1551.7 1232.1L1554.2 1229.9M1526.8 1244.0L1524.6 1248.7L1521.9 1247.9L1523.1 1244.7L1526.8 1244.0M1551.9 1248.2L1551.2 1252.1L1550.0 1254.7L1551.4 1257.8L1551.9 1260.1L1556.4 1260.6L1560.4 1263.4L1560.6 1260.1L1557.2 1259.3L1553.9 1256.0L1555.9 1253.1L1555.7 1248.2L1551.9 1248.2M1563.6 1270.7L1566.4 1275.0L1565.6 1279.0L1563.4 1280.8L1560.4 1277.0L1555.2 1277.8L1557.7 1275.3L1560.1 1273.8L1563.6 1270.7M1549.0 1266.4L1543.2 1274.0L1546.5 1270.5L1549.0 1266.4M1542.5 1277.5L1545.7 1280.0L1548.2 1282.5L1544.7 1285.0L1545.2 1290.0L1547.7 1292.5L1544.0 1296.2L1541.5 1299.9L1540.3 1304.9L1536.5 1303.7L1529.8 1303.2L1525.8 1302.4L1525.3 1297.9L1522.9 1292.5L1524.4 1290.0L1527.8 1291.2L1529.1 1288.0L1532.8 1286.8L1535.8 1283.5L1539.0 1281.3L1542.5 1277.5M1488.8 1281.0L1495.5 1284.5L1500.0 1287.5L1503.7 1291.2L1509.2 1293.7L1511.4 1297.4L1515.2 1301.2L1515.7 1303.9L1514.9 1309.6L1511.7 1308.6L1506.2 1304.4L1501.7 1298.7L1498.0 1294.5L1494.8 1289.5L1491.8 1285.5L1488.8 1281.0M1515.4 1309.9L1519.1 1310.1L1527.8 1312.1L1532.3 1312.1L1536.5 1314.2L1536.3 1316.4L1529.1 1315.7L1521.6 1313.9L1516.7 1312.4L1513.7 1311.9L1515.4 1309.9M1562.6 1291.5L1557.7 1293.0L1551.4 1292.7L1550.2 1294.0L1549.5 1297.2L1547.2 1301.9L1549.2 1304.9L1548.7 1308.6L1551.2 1308.9L1551.2 1306.4L1552.7 1303.2L1553.9 1306.9L1558.2 1306.2L1556.2 1302.9L1553.7 1299.7L1553.9 1297.4L1558.2 1297.4L1554.9 1296.5L1553.4 1294.0L1560.6 1293.7L1562.6 1291.5M1569.8 1290.0L1571.3 1293.7L1569.8 1296.5L1568.6 1292.5L1569.8 1290.0M1577.5 1296.9L1585.0 1298.7L1588.2 1301.7L1593.7 1303.4L1596.2 1300.9L1602.4 1301.4L1608.6 1302.9L1612.3 1304.9L1614.8 1308.6L1618.8 1310.6L1617.8 1313.7L1619.8 1316.2L1624.8 1319.9L1625.7 1321.7L1621.0 1320.4L1616.1 1317.4L1611.1 1314.9L1608.1 1317.4L1603.6 1317.7L1597.4 1315.9L1596.2 1313.1L1594.9 1308.6L1588.7 1306.4L1583.7 1304.7L1581.3 1304.9L1580.0 1301.4L1583.7 1300.7L1578.8 1298.9L1577.5 1296.9M1547.0 1345.7L1553.4 1343.1L1555.9 1339.1L1558.9 1336.0L1563.4 1331.9L1567.6 1329.6L1572.3 1332.7L1574.1 1332.2L1576.3 1326.3L1581.3 1324.5L1587.5 1325.0L1591.9 1325.8L1589.0 1331.4L1592.4 1335.2L1598.7 1338.4L1602.1 1339.4L1603.6 1335.2L1603.9 1327.5L1606.1 1321.7L1608.6 1326.3L1611.3 1330.9L1613.3 1332.7L1615.1 1339.1L1616.8 1343.1L1621.5 1347.0L1626.0 1352.4L1633.4 1373.2L1617.3 1397.2L1542.7 1387.9L1534.8 1351.0L1540.3 1348.4L1547.0 1345.7M858.6 1240.0L860.4 1240.8L858.9 1240.8L858.6 1240.0M862.6 1241.7L864.3 1242.6L863.1 1242.9L862.6 1241.7M864.6 1243.7L867.3 1245.5L865.1 1247.1L864.6 1243.7M855.1 1238.4L856.1 1239.2L855.1 1238.4M1555.2 1266.2L1557.7 1268.7L1556.2 1271.0L1554.9 1268.2L1555.2 1266.2M1561.1 1263.9L1563.9 1267.5L1562.6 1270.0L1561.4 1266.7L1561.1 1263.9M1560.1 1266.7L1558.2 1271.0L1559.1 1268.7L1560.1 1266.7M1537.8 1315.2L1538.3 1316.9L1539.5 1315.9L1537.8 1315.2M1540.3 1315.7L1541.5 1317.2L1542.0 1315.9L1540.3 1315.7M1542.7 1315.4L1543.2 1317.4L1547.7 1316.9L1542.7 1315.4M1550.0 1315.7L1551.4 1317.2L1557.7 1316.2L1550.0 1315.7M1560.1 1318.2L1558.9 1320.7L1563.4 1317.4L1567.6 1315.9L1560.1 1318.2M1547.7 1318.7L1552.2 1320.7L1547.7 1318.9M1570.1 1301.9L1577.0 1303.7L1570.6 1303.4L1570.1 1301.9M1565.1 1302.7L1565.6 1304.4L1568.1 1303.4L1565.1 1302.7M901.6 1050.8L901.6 1106.0L906.6 1107.5L910.3 1112.3L914.0 1112.8L916.0 1109.4L920.3 1117.1L929.0 1126.2L927.5 1131.9M946.3 1154.9L1015.4 1154.9L1019.7 1156.4L1029.6 1157.9L1033.3 1161.2L1042.0 1164.1L1044.5 1166.6L1047.7 1174.7L1045.5 1178.7L1047.0 1180.8L1055.2 1178.1L1055.7 1175.4L1061.9 1174.3L1063.6 1171.2L1066.4 1169.5L1074.3 1169.5L1075.6 1168.4L1077.6 1164.1L1080.0 1160.9L1083.0 1161.6L1083.5 1166.3L1085.0 1168.8M961.0 1209.2L967.0 1208.9L976.2 1213.0L983.1 1213.0L983.1 1211.5L987.3 1211.5L991.3 1215.0L995.5 1218.8L1000.0 1217.3L1003.0 1222.4L1005.5 1226.6L1010.5 1228.3M1022.9 1258.5L1023.1 1256.7L1024.1 1254.4L1027.1 1254.4L1025.9 1251.3L1025.9 1250.0L1030.5 1250.0L1032.6 1248.2M1030.5 1250.0L1031.1 1254.9M1028.1 1260.3L1029.8 1258.8L1030.3 1257.0L1031.8 1254.9M1029.8 1258.8L1033.8 1261.4M1035.1 1262.4L1038.3 1260.3L1041.5 1257.8L1045.0 1257.3M1039.0 1267.2L1044.0 1267.7M1046.0 1275.0L1046.7 1271.0M1058.4 1277.0L1059.7 1273.3M1072.6 1265.4L1070.8 1268.7L1072.1 1273.8L1073.1 1277.5L1078.0 1277.5L1084.3 1279.8L1083.5 1285.0L1085.5 1292.0M1102.9 1273.8L1101.7 1277.5L1099.9 1280.0L1102.9 1283.8L1095.9 1285.0L1091.7 1286.3L1093.0 1292.5L1085.5 1292.0M1102.9 1283.8L1102.9 1288.7L1104.1 1292.0L1111.6 1290.0L1109.9 1280.3M1111.6 1290.0L1116.6 1289.5L1117.8 1280.8M1116.6 1289.5L1121.3 1289.2L1123.8 1284.3M1085.5 1292.0L1079.3 1297.4L1078.3 1305.4M1056.2 1291.5L1059.4 1293.0L1064.4 1294.5L1065.1 1297.4L1070.6 1300.7L1076.8 1300.7L1078.3 1305.4M1052.5 1303.4L1054.4 1306.2L1056.4 1307.4L1061.9 1302.4L1064.4 1300.7L1065.1 1297.4M1078.3 1305.4L1068.6 1312.4L1071.8 1318.7L1072.3 1319.9L1079.0 1322.5L1081.3 1326.3L1079.5 1332.7L1079.3 1339.1L1077.1 1341.2M1079.0 1322.5L1089.5 1319.9L1091.7 1326.3L1099.2 1330.1L1102.4 1336.0L1107.9 1343.9L1107.9 1351.0M1079.3 1339.1L1082.3 1348.4L1085.0 1353.7M1095.9 1351.0L1097.4 1348.4L1107.4 1345.7M1247.8 1175.0L1253.7 1177.1L1260.0 1178.4M1229.9 1179.8L1235.8 1179.4L1234.9 1183.1L1234.6 1187.0L1234.4 1192.1L1233.6 1195.2M1258.2 1146.8L1261.9 1149.1L1264.2 1151.8L1266.4 1153.0L1268.6 1154.1L1272.4 1154.9L1270.9 1160.1L1267.2 1164.5L1269.4 1166.3L1269.1 1169.1L1270.9 1172.6L1270.6 1173.6M1260.4 1145.6L1266.4 1146.4L1266.9 1147.9L1267.2 1150.7L1266.4 1153.0M1269.9 1137.8L1269.4 1141.5L1266.9 1144.0L1266.9 1147.9M1267.2 1150.7L1267.9 1153.0M1270.9 1160.1L1275.6 1160.1L1275.9 1162.3L1277.8 1164.1L1274.4 1165.9L1269.4 1166.3M1275.6 1160.1L1284.3 1160.5L1286.3 1156.4L1294.0 1155.6L1294.5 1159.7L1292.0 1162.7L1288.0 1164.1L1282.8 1163.8L1278.1 1162.3L1275.6 1160.1M1286.0 1167.4L1286.0 1164.1L1291.8 1163.8L1291.8 1167.7L1290.0 1167.7L1286.0 1167.4M1273.4 1131.1L1276.6 1131.5M1287.3 1134.9L1287.0 1139.9L1289.3 1147.2L1288.0 1147.9L1282.1 1149.9L1283.1 1153.0L1286.3 1156.4M1289.3 1147.2L1293.0 1149.9L1298.0 1151.1L1299.0 1153.0L1294.0 1155.6M1299.0 1153.0L1307.9 1153.7L1307.2 1156.8L1308.7 1159.0L1296.2 1159.4L1294.5 1159.7M1307.9 1153.7L1311.6 1149.1L1310.6 1144.8L1309.7 1141.9L1310.4 1135.3L1308.4 1133.2L1301.0 1133.2M1308.4 1133.2L1306.7 1130.6L1304.4 1127.6M1310.4 1135.3L1315.4 1134.1L1318.1 1129.8L1314.1 1125.3L1304.2 1124.4M1318.1 1129.8L1321.6 1126.2L1320.3 1119.4L1314.1 1119.0L1312.4 1117.6M1320.3 1119.4L1320.3 1117.1L1321.6 1110.4M1310.6 1144.8L1327.8 1145.2L1330.8 1142.8L1332.8 1139.1L1328.5 1134.9L1328.8 1127.6L1321.6 1126.2M1330.8 1142.8L1336.5 1141.9L1339.7 1146.0L1346.4 1149.9L1351.4 1153.0L1350.9 1158.6L1346.9 1161.9M1307.2 1156.8L1311.6 1158.6L1318.1 1157.5L1321.6 1156.8L1324.6 1160.5L1326.5 1164.1L1325.6 1167.7M1318.1 1157.5L1321.6 1160.5L1322.1 1164.1L1322.1 1167.7L1325.8 1168.4M1308.7 1159.0L1302.4 1165.2L1303.7 1166.6L1307.9 1170.2L1308.4 1173.0L1311.6 1173.6L1315.4 1174.0L1319.1 1172.6L1323.1 1174.0M1302.4 1165.2L1298.7 1166.6L1293.0 1164.1M1298.7 1166.6L1299.2 1169.1L1291.8 1169.8L1291.8 1171.9L1295.0 1174.7L1298.0 1177.7M1299.2 1169.1L1300.0 1171.2L1299.7 1174.7L1298.0 1177.7M1308.4 1173.0L1309.2 1175.7L1307.7 1178.7L1308.9 1182.1L1316.9 1182.1L1321.6 1179.8M1307.7 1178.7L1303.2 1179.8L1300.5 1177.7L1299.7 1174.7M1303.2 1179.8L1302.9 1183.1L1301.7 1187.3M1308.9 1182.1L1303.4 1183.4M1316.9 1182.1L1316.9 1183.4M1317.6 1180.4L1321.6 1179.8M1302.9 1055.0L1297.0 1059.1L1289.3 1074.5L1282.3 1089.1L1283.1 1102.4L1281.3 1111.4L1279.8 1112.8M1302.9 1055.0L1311.6 1058.4L1316.6 1057.7L1321.6 1049.3L1323.6 1047.1M1323.8 1049.3L1322.8 1061.8L1326.1 1074.5L1326.3 1086.2L1329.0 1097.2L1321.1 1104.4M1311.6 1058.4L1310.4 1065.0L1311.9 1075.7M1355.4 1181.1L1360.1 1183.1L1362.6 1185.7L1363.3 1188.3L1362.6 1194.9L1357.6 1195.9L1351.4 1196.5L1343.9 1197.1L1342.0 1198.0M1350.9 1174.7L1360.1 1177.7L1367.6 1180.1L1370.0 1182.4L1372.8 1180.4M1360.1 1183.1L1363.8 1182.4L1367.6 1180.1M1363.3 1188.3L1367.6 1189.9L1370.0 1188.0L1373.5 1191.5M1362.6 1194.9L1366.1 1200.5L1365.1 1205.0L1366.8 1208.0L1370.3 1212.4L1371.3 1216.7M1357.6 1195.9L1353.9 1203.5L1351.4 1206.8L1348.9 1210.1L1343.9 1212.4M1351.4 1206.8L1348.4 1207.1L1343.7 1210.1L1340.5 1208.9M1343.9 1212.4L1342.7 1218.2L1339.0 1218.8M1343.7 1210.1L1346.4 1216.7L1355.1 1213.9L1363.1 1219.3L1368.8 1218.8L1372.5 1221.0M1341.2 1203.2L1342.7 1203.5L1341.2 1207.1L1339.2 1208.0M1337.0 1213.0L1338.7 1218.2M1358.9 1252.1L1362.6 1250.8L1378.7 1246.9L1384.0 1252.1M1380.2 1233.5L1389.2 1237.6L1391.2 1246.9L1384.0 1252.1M1391.9 1228.0L1390.7 1231.3L1390.2 1233.5L1386.2 1231.9M1373.5 1191.5L1374.0 1194.3M1385.9 1194.9L1388.7 1195.9L1394.1 1192.7L1401.1 1195.2L1404.1 1199.0L1403.3 1203.5L1402.3 1206.5L1405.6 1212.4L1403.6 1217.3L1409.8 1218.8L1416.8 1218.2L1417.0 1212.4L1423.5 1211.0L1426.0 1206.5L1428.7 1205.0L1429.4 1200.5L1432.2 1196.2L1438.1 1195.9M1403.6 1217.3L1408.1 1224.7L1405.3 1230.2M1404.1 1199.0L1407.3 1200.2L1412.3 1197.4L1415.3 1195.2L1420.5 1194.3L1424.5 1195.2L1430.4 1194.3L1432.4 1191.8L1438.1 1195.9M1401.1 1195.2L1401.1 1193.0L1408.6 1186.3L1402.3 1180.4L1397.9 1179.1L1391.2 1183.1L1384.9 1182.1M1415.3 1195.2L1418.0 1191.2L1419.7 1186.3L1420.7 1182.4L1417.3 1182.4L1414.8 1174.0L1397.4 1169.5M1390.9 1169.5L1390.9 1182.1M1420.7 1182.4L1424.2 1183.7L1427.2 1181.7L1428.9 1178.4L1437.1 1176.7L1448.3 1177.1L1451.3 1179.8M1424.2 1183.7L1428.4 1185.7L1434.6 1185.4L1435.1 1188.3L1428.4 1188.6L1432.4 1191.8M1435.1 1188.3L1442.1 1185.7L1447.1 1182.7L1451.3 1179.8M1438.1 1195.9L1445.3 1200.5L1448.3 1209.5L1453.3 1215.3M1429.4 1200.5L1434.6 1203.5L1437.1 1208.0L1439.1 1209.5L1434.6 1216.7L1426.0 1225.2L1428.4 1232.1L1421.7 1234.6M1453.3 1215.3L1450.8 1220.7L1458.3 1226.6L1468.2 1226.6L1471.2 1225.2L1470.9 1221.9L1479.6 1223.0L1480.6 1225.8L1489.3 1221.9L1493.8 1221.6M1453.3 1215.3L1457.0 1218.2L1465.7 1222.4L1470.9 1221.9M1471.2 1226.6L1471.9 1230.8L1470.7 1232.1L1472.7 1236.7L1473.2 1239.4M1474.4 1226.6L1481.6 1230.2L1480.1 1233.5L1479.4 1235.7L1481.4 1241.6M1493.8 1221.6L1493.0 1225.2L1487.6 1230.8L1484.3 1234.9L1483.1 1238.9L1481.4 1241.6M1493.8 1221.6L1496.8 1229.4L1495.5 1233.5L1499.3 1236.2L1498.0 1238.9L1503.5 1240.2L1505.5 1237.6L1512.9 1236.7L1520.4 1240.2M1503.5 1240.2L1501.0 1243.4L1496.3 1245.5L1495.0 1250.8L1497.0 1253.4L1497.0 1257.3L1498.5 1264.9L1497.0 1270.0M1501.0 1243.4L1503.7 1245.5L1505.7 1249.7L1511.7 1249.0L1514.4 1254.7L1513.4 1259.0L1508.0 1259.8L1506.7 1263.6M1505.5 1237.6L1506.2 1242.1L1511.7 1245.5L1514.4 1250.8L1519.4 1257.3L1519.1 1262.4L1515.4 1266.2L1511.7 1268.7M1504.2 1279.0L1501.7 1278.0M1451.3 1179.8L1452.0 1169.5L1457.0 1168.4L1458.3 1162.3L1464.5 1161.6L1468.9 1154.9L1478.1 1151.8L1485.6 1149.1L1496.8 1143.2L1505.5 1149.9L1517.9 1152.2L1526.6 1153.0L1536.5 1151.4L1542.7 1158.6L1549.7 1161.2L1549.0 1164.1L1534.0 1169.5L1529.1 1170.5L1522.9 1178.1L1512.9 1179.8L1503.0 1178.1L1491.8 1177.1L1481.9 1169.5L1476.9 1168.8L1470.7 1158.6L1468.9 1154.9M1536.5 1151.4L1544.7 1151.8L1551.4 1141.1L1558.9 1137.8L1566.4 1141.1L1568.8 1153.0L1577.0 1157.9L1586.2 1159.4L1582.5 1169.5L1578.0 1171.2L1576.3 1178.1M1549.7 1161.2L1542.7 1158.6M1560.9 1186.0L1566.4 1179.8L1570.1 1181.4L1575.8 1178.4M1562.1 1191.8L1567.6 1192.7L1570.8 1190.8M1468.9 1154.9L1459.5 1149.1L1450.8 1147.2L1444.6 1137.0L1434.6 1132.8L1423.5 1129.3L1413.5 1132.8L1403.6 1135.7L1404.8 1145.2L1398.6 1147.9L1389.9 1145.2L1381.2 1147.9L1373.8 1145.2L1370.0 1151.1L1367.6 1156.8L1371.3 1160.5L1373.8 1164.1M1246.5 1201.7L1247.8 1205.0L1249.0 1211.0L1239.8 1218.2L1230.4 1220.5L1230.4 1223.3L1219.7 1223.3M1230.4 1224.4L1230.4 1228.3L1237.1 1230.8L1224.7 1240.2L1219.7 1240.8L1209.8 1240.2M1237.1 1230.8L1262.7 1246.1L1270.6 1240.2L1280.6 1234.9L1276.8 1232.7L1276.6 1226.6L1275.6 1215.9L1277.6 1211.0L1280.3 1207.4M1273.4 1195.9L1271.4 1205.0L1275.6 1210.4M1280.6 1234.9L1288.0 1237.6L1291.0 1245.5L1301.7 1244.2L1311.6 1239.4L1311.6 1244.2L1310.4 1256.0L1307.7 1263.6L1308.7 1268.7L1310.4 1272.5L1312.9 1273.8L1320.1 1281.3L1326.5 1284.3M1313.9 1238.9L1343.7 1238.9M1313.9 1238.9L1314.1 1212.4M1311.6 1239.4L1313.9 1238.9M1209.8 1258.0L1221.7 1256.0L1223.4 1253.4L1238.3 1257.3L1245.8 1253.6L1262.4 1253.6L1262.7 1246.1M1221.7 1256.0L1223.2 1263.4L1220.9 1264.2L1217.2 1263.1L1212.2 1261.1L1217.7 1260.8L1213.7 1260.3L1210.5 1261.4M1210.5 1263.6L1218.0 1264.2L1219.2 1265.9L1214.7 1267.7M1220.9 1264.2L1225.9 1267.5L1230.9 1264.9L1232.1 1268.7L1231.6 1271.2L1232.1 1273.8L1231.4 1276.8L1228.4 1275.3L1225.9 1273.8L1223.9 1270.2L1218.9 1272.0M1225.9 1273.8L1223.4 1277.5M1231.4 1276.8L1232.1 1278.8L1233.1 1284.0M1230.9 1264.9L1238.3 1269.5L1245.0 1270.0L1252.0 1267.5L1254.5 1267.5L1257.0 1263.6L1253.2 1258.5L1250.8 1257.3L1238.3 1257.3M1238.3 1269.5L1241.3 1271.2L1245.0 1272.5L1245.0 1282.3M1252.0 1267.5L1253.2 1271.2L1253.7 1275.0L1255.0 1279.8M1254.5 1267.5L1255.7 1270.0L1256.0 1272.5L1256.5 1279.5M1257.0 1263.6L1260.9 1265.7L1260.9 1270.0L1258.7 1273.8L1258.7 1279.3M1260.9 1265.7L1261.9 1261.1L1269.4 1260.6L1276.8 1262.9L1285.8 1261.6L1288.3 1264.9L1290.5 1270.0L1291.8 1275.0L1289.8 1276.3L1288.3 1282.5L1292.3 1289.5L1285.1 1290.0L1280.1 1289.5L1276.4 1289.2M1285.8 1261.6L1287.0 1260.8L1291.8 1256.0L1291.0 1245.5M1288.3 1264.9L1284.3 1275.5L1280.6 1278.8L1274.4 1283.8M1307.7 1263.6L1305.4 1268.7L1301.7 1272.5L1298.0 1276.3L1291.8 1275.0M1288.3 1282.5L1294.2 1284.3L1300.5 1282.5L1307.9 1284.3L1315.4 1282.5L1326.5 1284.3M1292.3 1289.5L1296.0 1298.7L1290.5 1306.9L1282.6 1309.4M1280.1 1289.5L1284.8 1292.7L1280.6 1301.2L1280.6 1306.2M1276.4 1289.5L1276.4 1292.5L1280.1 1292.5M1282.6 1309.4L1293.0 1309.9L1295.5 1313.7L1300.0 1314.9L1305.4 1312.4L1307.4 1322.5L1311.6 1322.5L1311.6 1327.5L1325.3 1328.8L1326.1 1325.5L1328.5 1316.2L1325.3 1309.9L1325.3 1306.2L1324.1 1301.2L1325.6 1298.2L1329.0 1291.2L1328.8 1285.5L1326.5 1284.3M1311.6 1322.5L1306.7 1336.5L1304.2 1340.4L1310.4 1340.4L1314.1 1339.1L1326.5 1334.2L1334.0 1332.7L1334.0 1324.2L1334.0 1318.7L1328.5 1316.2M1281.3 1340.4L1285.5 1338.6L1298.0 1339.1L1304.2 1340.4M1314.1 1339.1L1329.8 1351.6L1324.1 1351.8L1319.1 1357.8L1314.1 1359.2L1301.7 1351.0L1304.2 1340.4M1326.5 1334.2L1332.8 1336.5L1329.8 1351.6M1338.2 1323.7L1340.2 1331.4L1339.5 1336.5L1334.0 1332.7M1338.2 1323.7L1352.4 1321.2M1334.0 1318.7L1329.0 1316.2L1325.3 1306.2M1325.6 1298.2L1336.5 1297.4L1345.7 1306.7L1349.4 1306.7M1336.5 1297.4L1338.0 1292.5L1336.5 1284.5L1341.2 1283.5L1345.2 1284.3L1350.9 1286.3L1354.4 1285.0L1353.9 1288.0L1355.1 1298.7M1328.8 1285.5L1336.5 1284.5M1341.2 1283.5L1337.7 1278.8L1336.2 1273.8L1337.2 1270.0L1342.0 1263.6L1343.9 1259.0L1347.4 1258.5L1351.4 1257.8L1357.6 1262.9M1342.0 1263.6L1343.9 1259.0L1347.7 1250.8L1347.9 1249.5M1337.2 1270.0L1334.0 1271.2L1336.2 1273.8M1354.4 1285.0L1358.9 1283.8L1363.8 1282.5L1371.0 1275.0L1373.8 1267.5M1358.1 1263.1L1356.4 1266.2L1358.4 1267.5L1359.6 1267.7M1334.0 1271.2L1321.6 1270.7L1316.6 1268.7L1309.2 1264.9L1308.7 1268.7M1328.8 1285.5L1319.1 1283.3L1315.4 1282.5M1324.1 1351.8L1331.5 1357.8L1333.5 1363.3M1602.4 1301.4L1602.4 1317.7M1545.0 1284.3L1539.0 1290.0L1534.0 1291.7L1527.8 1292.5L1524.4 1290.5M1620.5 1309.9L1624.8 1308.6L1629.7 1305.7L1629.2 1308.1L1626.0 1310.4L1620.5 1309.9M1626.5 1301.4L1629.7 1302.9L1632.2 1306.2L1629.2 1303.7L1626.5 1301.4M1640.9 1311.9L1643.4 1313.7L1641.6 1312.9L1640.9 1311.9M1647.1 1315.4L1650.8 1317.4L1647.9 1316.9L1647.1 1315.4M1649.6 1318.7L1652.1 1319.4L1650.8 1318.4M1654.1 1320.7L1655.3 1322.0M1666.5 1332.7L1667.7 1335.2L1666.0 1333.7L1666.5 1332.7M1114.1 1144.8L1118.8 1151.8L1120.3 1156.8L1120.8 1162.3L1119.1 1163.4L1114.1 1160.1L1104.6 1160.1L1107.1 1154.9L1109.1 1149.1L1114.1 1144.8M933.2 1147.9L940.1 1154.9L945.4 1157.1L942.6 1153.4L937.6 1149.1L933.2 1147.9M1093.0 1164.1L1093.0 1162.7L1097.9 1164.5L1093.0 1164.1M1375.3 1215.9L1371.3 1216.7M939 1032L946 1041L953 1038L955 1032M958 1031L957 1036L963 1039L958 1041L960 1044L972 1045.5L962 1048.5L964 1053.5L969 1057L972 1059.5L966 1062.5L972 1064L980 1062L981.5 1065.5L984 1061L990 1057.5L994 1061L1000 1064L1007 1063L1008 1059L1013 1060L1016 1062L1013 1066M1003 1031L1001 1040L1000.5 1045L1008 1052L1002 1055L997 1052L999 1048M992 1031L999 1037L1003 1031M1028 1031L1029 1040L1032 1045L1039 1049L1047 1050L1050 1049L1056 1052L1059 1055.5L1061 1060M1011 1031L1013 1042L1017 1049L1024 1057L1024 1060" fill="none" stroke="#5c5c5c" stroke-width="1.1" stroke-linejoin="round"/><circle cx="951.2" cy="1190" r="15.5" fill="#5cc46b" fill-opacity="0.10"/><circle cx="973.1" cy="1206.2" r="15.5" fill="#5cc46b" fill-opacity="0.10"/><circle cx="951.2" cy="1190" r="8.4" fill="#5cc46b"/><circle cx="973.1" cy="1206.2" r="8.4" fill="#5cc46b"/></svg>
<!--MAPEND-->


</body></html>
